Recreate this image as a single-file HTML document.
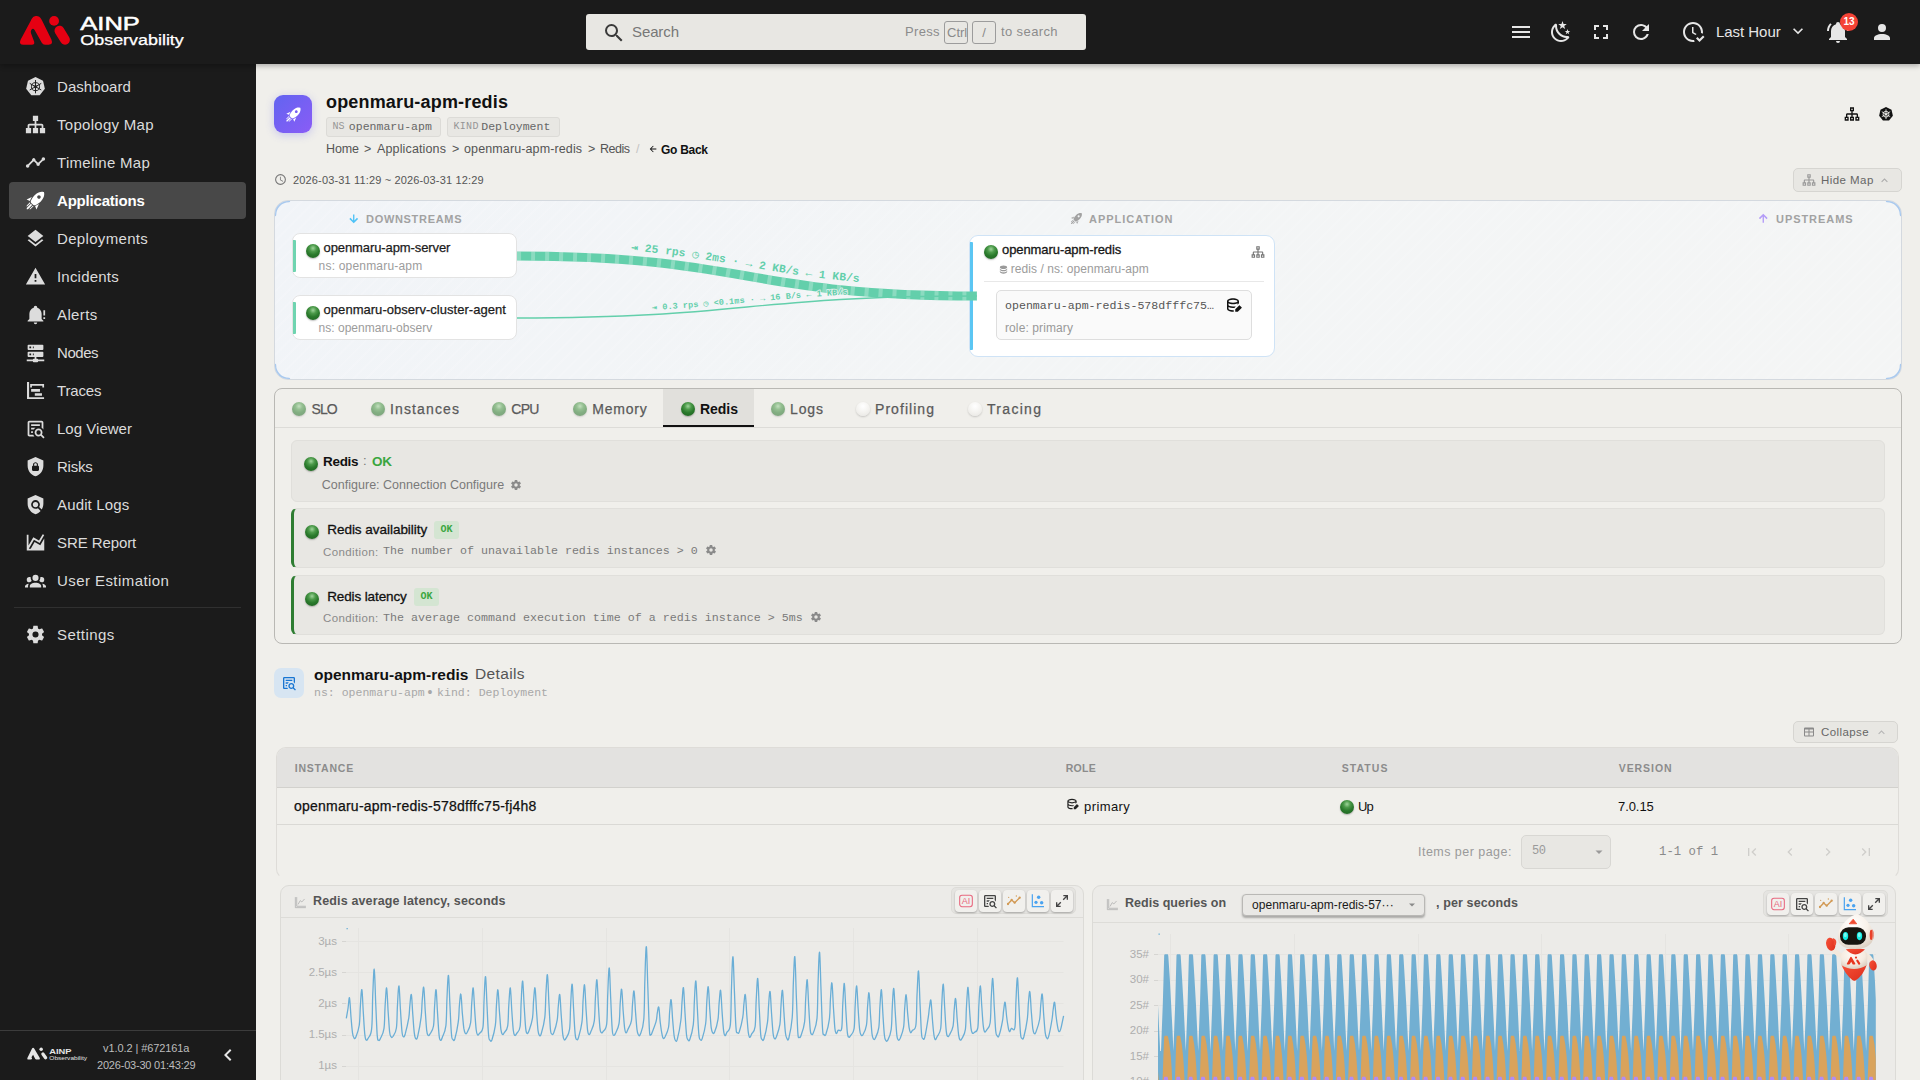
<!DOCTYPE html>
<html lang="en">
<head>
<meta charset="utf-8">
<title>openmaru-apm-redis - AINP Observability</title>
<style>
*{box-sizing:border-box;margin:0;padding:0}
html,body{width:1920px;height:1080px;overflow:hidden;background:#f0efeb;color:#1a1a1a;
  font-family:"Liberation Sans","Noto Sans CJK KR",sans-serif;font-size:13px}
.mono{font-family:"Liberation Mono","Noto Sans Mono CJK KR",monospace}
.abs{position:absolute}
.t{position:absolute;white-space:pre;line-height:1}
svg{display:block;overflow:visible}

/* ---------- top bar ---------- */
#topbar{position:absolute;left:0;top:0;width:1920px;height:64px;background:#1b1b1b;z-index:20;
  box-shadow:0 2px 5px rgba(0,0,0,.28)}
#search{position:absolute;left:586px;top:14px;width:500px;height:36px;background:#e8e7e3;border-radius:3px}
.kbd{position:absolute;top:7px;height:23px;border:1px solid #9c9c9c;border-radius:3px;color:#8a8a8a;
  font-size:13px;line-height:21px;text-align:center}

/* ---------- sidebar ---------- */
#sidebar{position:absolute;left:0;top:64px;width:256px;height:1016px;background:#1b1b1b;z-index:10}
.nav{position:absolute;left:9px;width:237px;height:37px;border-radius:4px;color:#dcdcdc;font-size:15px}
.nav.on{background:#484848;color:#fff;font-weight:700}
.nav svg{position:absolute;left:16px;top:8px;width:21px;height:21px;fill:#dcdcdc}
.nav.on svg{fill:#fff}
.nav span{position:absolute;left:48px;top:0;line-height:37px;white-space:pre;letter-spacing:.35px}

/* ---------- main ---------- */
#main{position:absolute;left:256px;top:64px;width:1664px;height:1016px;background:#f0efeb;overflow:hidden}

/* ---------- header ---------- */
.badge{position:absolute;top:53px;height:20px;background:#e8e7e3;border:1px solid #dcdbd7;border-radius:3px}
.badge b{position:absolute;top:4px;font-size:10px;font-weight:400;color:#959595;line-height:1}
.badge i{position:absolute;top:3px;font-style:normal;font-size:11.5px;color:#666;line-height:1;white-space:pre}
.crumb{position:absolute;top:78px;font-size:12.5px;color:#555;line-height:15px;white-space:pre}
.btn{position:absolute;background:#e8e7e3;border:1px solid #d6d5d1;border-radius:5px;color:#666;font-size:11.5px}
.orb{position:absolute;width:14px;height:14px;border-radius:50%;
  background:radial-gradient(circle at 50% 30%,#9ed49a 0%,#4c9a4a 28%,#2a7a2c 55%,#1d5e20 100%);
  box-shadow:0 1px 1.5px rgba(0,0,0,.25)}
.orb.dim{opacity:.55}
.orb.off{background:radial-gradient(circle at 50% 30%,#fff 0%,#f4f3f0 50%,#e6e5e1 100%);box-shadow:0 1px 2px rgba(0,0,0,.18)}
/* ---------- map ---------- */
#map{position:absolute;left:18px;top:136px;width:1628px;height:180px;border:1px solid #d4d9df;border-radius:14px;
  background-image:repeating-linear-gradient(135deg,rgba(255,255,255,.12) 0 2px,rgba(255,255,255,0) 2px 9px),linear-gradient(120deg,#f1f4f8 0%,#f3f5f6 45%,#f4f5f5 100%);overflow:hidden}
.maplbl{position:absolute;top:12px;font-size:11px;font-weight:700;color:#a2a2a2;letter-spacing:.75px;line-height:12px;white-space:pre}
.node{position:absolute;left:17px;width:225px;height:45px;background:#fff;border:1px solid #e3e3e3;border-radius:8px}
.node:before{content:"";position:absolute;left:0;top:6px;width:3px;height:32px;background:#6fd4b0;border-radius:0 1px 1px 0}
.node .nm{position:absolute;left:32px;top:6px;font-size:13px;color:#1c1c1c;line-height:15px;white-space:pre;-webkit-text-stroke:.25px #1c1c1c}
.node .ns{position:absolute;left:27px;top:25px;font-size:12px;color:#9c9c9c;line-height:14px;white-space:pre;letter-spacing:.2px}

/* ---------- tabs panel ---------- */
#panel{position:absolute;left:18px;top:324px;width:1628px;height:256px;border:1px solid #b9b8b4;border-radius:8px;background:#f0efeb}
.tab{position:absolute;top:0;height:38px;font-size:14px;color:#5a5a5a;white-space:pre}
.tab .orb{top:13px}
.tab span{position:absolute;top:12px;line-height:17px;-webkit-text-stroke:.25px #5a5a5a}
.tab.on{background:#e1e0dc;border-bottom:2px solid #111;color:#111}
.tab.on span{font-weight:700;-webkit-text-stroke:0}
.scard{position:absolute;left:16px;width:1594px;background:#e8e7e3;border:1px solid #e0dfdb;border-radius:6px}
.scard.g{border-left:3px solid #2e7d32}
.scard .ttl{position:absolute;font-size:13.5px;color:#111;line-height:16px;white-space:pre;-webkit-text-stroke:.3px #111}
.chip{position:absolute;height:18px;width:25px;background:#d4e5d2;border-radius:3px;color:#3aa640;font-size:10px;font-weight:700;line-height:18px;text-align:center}
.cond{position:absolute;font-size:11.5px;color:#8a8a8a;line-height:14px;white-space:pre;letter-spacing:.35px}
.condm{position:absolute;font-size:11.65px;color:#7a7a7a;line-height:14px;white-space:pre}

/* ---------- details / table ---------- */
#tbl{position:absolute;left:20px;top:683px;width:1623px;height:132px;border:1px solid #dedcd8;border-bottom-color:transparent;border-radius:10px;overflow:hidden;background:#f0efeb}
#tbl .hd{position:absolute;left:0;top:0;width:100%;height:40px;background:#e3e2e0;border-bottom:1px solid #d2d1cd}
.th{position:absolute;top:14px;margin-left:.7px;font-size:10.5px;font-weight:700;color:#8c8c8c;letter-spacing:1.2px;line-height:12px;white-space:pre}
.td{position:absolute;top:50px;font-size:13px;color:#111;line-height:16px;white-space:pre}
/* ---------- chart cards ---------- */
.chart{position:absolute;top:821px;width:804px;height:260px;border:1px solid #dcdbd7;border-radius:9px;background:#ecebe8;overflow:hidden}
.chart .hdr{position:absolute;left:0;top:0;width:100%;border-bottom:1px solid #dddcd8}
.ctitle{position:absolute;font-size:12.5px;font-weight:700;color:#555;line-height:15px;white-space:pre;letter-spacing:.45px}
.tools{position:absolute;width:125px;height:27px;background:#e5e4e1;border:1px solid #dddcd8;border-radius:5px}
.tools div{position:absolute;top:2px;width:22px;height:22px;background:#f1f0ed;border-radius:4px;box-shadow:0 1px 2px rgba(0,0,0,.28)}
.tools svg{position:absolute;left:3px;top:3px;width:16px;height:16px}
.yl{position:absolute;font-size:11.5px;color:#aeaeae;line-height:14px;text-align:right;width:50px;white-space:pre}
</style>
</head>
<body>

<!-- ================= TOP BAR ================= -->
<div id="topbar">
  <!-- logo -->
  <svg class="abs" style="left:20px;top:16px" width="50" height="30" viewBox="0 0 50 30">
    <path fill="#e60012" d="M10.900,4.600 C12.600,0.600 14.400,-0.100 16.400,-0.100 C18.600,-0.100 20,0.800 21.800,4 L31.400,23.600 Q33.400,28.800 28.600,28.800 L25,28.800 Q22.900,28.800 21.800,26.800 L14.600,14 Q13,11.600 11.400,13.800 Q10.300,15.400 11,17.200 L14.100,25.600 Q15,28.800 11.800,28.800 L3.600,28.800 Q-1.600,28.800 0.600,23.800 Z"/>
    <circle fill="#e60012" cx="34.100" cy="4.900" r="4.900"/>
    <path fill="none" stroke="#e60012" stroke-width="9.800" stroke-linecap="round" d="M39.400,14.600 L45,23.800"/>
  </svg>
  <svg class="abs" style="left:78px;top:12px" width="112" height="40" viewBox="0 0 112 40">
    <text x="2.300" y="17.700" fill="#fff" stroke="#fff" stroke-width=".5" font-family="Liberation Sans, sans-serif" font-weight="400" font-size="18.700" textLength="59.500" lengthAdjust="spacingAndGlyphs">AINP</text>
    <text x="2.300" y="32.600" fill="#fff" stroke="#fff" stroke-width=".25" font-family="Liberation Sans, sans-serif" font-weight="400" font-size="13.800" textLength="103.500" lengthAdjust="spacingAndGlyphs">Observability</text>
  </svg>
  <!-- search -->
  <div id="search">
    <svg class="abs" style="left:16px;top:7px" width="24" height="24" viewBox="0 0 24 24"><path fill="#3a3a3a" d="M9.5,3A6.5,6.5 0 0,1 16,9.5C16,11.11 15.41,12.59 14.44,13.73L14.71,14H15.5L20.5,19L19,20.5L14,15.5V14.71L13.73,14.44C12.59,15.41 11.11,16 9.5,16A6.5,6.5 0 0,1 3,9.5A6.5,6.5 0 0,1 9.5,3M9.5,5C7,5 5,7 5,9.5C5,12 7,14 9.5,14C12,14 14,12 14,9.5C14,7 12,5 9.5,5Z"/></svg>
    <span class="t" style="left:46px;top:10px;font-size:15px;color:#777;letter-spacing:-0.11px">Search</span>
    <span class="t" style="left:319px;top:11px;font-size:13px;color:#8c8c8c;letter-spacing:0.34px">Press</span>
    <span class="kbd" style="left:358px;width:24px;overflow:hidden;text-align:left;padding-left:2px">Ctrl</span>
    <span class="kbd" style="left:386px;width:24px">/</span>
    <span class="t" style="left:415px;top:11px;font-size:13px;color:#8c8c8c;letter-spacing:0.39px">to search</span>
  </div>
  <!-- right icons -->
  <svg class="abs" style="left:1509px;top:20px" width="24" height="24" viewBox="0 0 24 24"><path fill="#e6e6e6" d="M3,6H21V8H3V6M3,11H21V13H3V11M3,16H21V18H3V16Z"/></svg>
  <svg class="abs" style="left:1549px;top:20px" width="24" height="24" viewBox="0 0 24 24"><path fill="#e6e6e6" d="M17.75,4.09L15.22,6.03L16.13,9.09L13.5,7.28L10.87,9.09L11.78,6.03L9.25,4.09L12.44,4L13.5,1L14.56,4L17.75,4.09M21.25,11L19.61,12.25L20.2,14.23L18.5,13.06L16.8,14.23L17.39,12.25L15.75,11L17.81,10.95L18.5,9L19.19,10.95L21.25,11M18.97,15.95C19.8,15.87 20.69,17.05 20.16,17.8C19.84,18.25 19.5,18.67 19.08,19.07C15.17,23 8.84,23 4.94,19.07C1.03,15.17 1.03,8.83 4.94,4.93C5.34,4.53 5.76,4.17 6.21,3.85C6.96,3.32 8.14,4.21 8.06,5.04C7.79,7.9 8.75,10.87 10.95,13.06C13.14,15.26 16.1,16.22 18.97,15.95M17.33,17.97C14.5,17.81 11.7,16.64 9.53,14.5C7.36,12.31 6.2,9.5 6.04,6.68C3.23,9.82 3.34,14.64 6.35,17.66C9.37,20.67 14.19,20.78 17.33,17.97Z"/></svg>
  <svg class="abs" style="left:1589px;top:20px" width="24" height="24" viewBox="0 0 24 24"><path fill="#e6e6e6" d="M5,5H10V7H7V10H5V5M14,5H19V10H17V7H14V5M17,14H19V19H14V17H17V14M10,17V19H5V14H7V17H10Z"/></svg>
  <svg class="abs" style="left:1629px;top:20px" width="24" height="24" viewBox="0 0 24 24"><path fill="#e6e6e6" d="M17.65,6.35C16.2,4.9 14.21,4 12,4A8,8 0 0,0 4,12A8,8 0 0,0 12,20C15.73,20 18.84,17.45 19.73,14H17.65C16.83,16.33 14.61,18 12,18A6,6 0 0,1 6,12A6,6 0 0,1 12,6C13.66,6 15.14,6.69 16.22,7.78L13,11H20V4L17.65,6.35Z"/></svg>
  <svg class="abs" style="left:1681px;top:20px" width="24" height="24" viewBox="0 0 24 24"><path fill="#e6e6e6" d="M23.5,17L18.5,22L15,18.5L16.5,17L18.5,19L22,15.5L23.5,17M13.1,19.9C12.7,20 12.4,20 12,20C7.6,20 4,16.4 4,12C4,7.6 7.6,4 12,4C16.4,4 20,7.6 20,12C20,12.4 20,12.7 19.9,13.1C20.6,13.2 21.2,13.4 21.8,13.7C21.9,13.1 22,12.6 22,12C22,6.5 17.5,2 12,2C6.5,2 2,6.5 2,12C2,17.5 6.5,22 12,22C12.6,22 13.2,21.9 13.7,21.8C13.4,21.3 13.2,20.6 13.1,19.9M15.6,14.1L12.5,12.3V7H11V13L14.5,15.1C14.8,14.7 15.2,14.4 15.6,14.1Z"/></svg>
  <span class="t" style="left:1716px;top:24px;font-size:15px;color:#e6e6e6;letter-spacing:-0.04px">Last Hour</span>
  <svg class="abs" style="left:1788px;top:21px" width="20" height="20" viewBox="0 0 24 24"><path fill="#e6e6e6" d="M7.41,8.58L12,13.17L16.59,8.58L18,10L12,16L6,10L7.41,8.58Z"/></svg>
  <svg class="abs" style="left:1826px;top:20px" width="24" height="24" viewBox="0 0 24 24"><path fill="#e6e6e6" d="M21,19V20H3V19L5,17V11C5,7.9 7.03,5.17 10,4.29C10,4.19 10,4.1 10,4A2,2 0 0,1 12,2A2,2 0 0,1 14,4C14,4.1 14,4.19 14,4.29C16.97,5.17 19,7.9 19,11V17L21,19M14,21A2,2 0 0,1 12,23A2,2 0 0,1 10,21M19.75,3.19L18.33,4.61C20.04,6.3 21,8.6 21,11H23C23,8.07 21.84,5.25 19.75,3.19M1,11H3C3,8.6 3.96,6.3 5.67,4.61L4.25,3.19C2.16,5.25 1,8.07 1,11Z"/></svg>
  <div class="abs" style="left:1840px;top:13px;width:18px;height:18px;border-radius:9px;background:#f44336;color:#fff;font-size:10px;font-weight:700;line-height:18px;text-align:center">13</div>
  <svg class="abs" style="left:1870px;top:20px" width="24" height="24" viewBox="0 0 24 24"><path fill="#e6e6e6" d="M12,4A4,4 0 0,1 16,8A4,4 0 0,1 12,12A4,4 0 0,1 8,8A4,4 0 0,1 12,4M12,14C16.42,14 20,15.79 20,18V20H4V18C4,15.79 7.58,14 12,14Z"/></svg>
</div>

<!-- ================= SIDEBAR ================= -->
<div id="sidebar">
  <div class="nav" style="top:4px"><svg viewBox="0 0 24 24"><path d="M12 1.2 L20.6 5.3 L22.7 14.6 L16.8 22 L7.2 22 L1.3 14.6 L3.4 5.3 Z"/><g fill="none" stroke="#1b1b1b" stroke-width="1.1"><circle cx="12" cy="12.2" r="4.6"/><circle cx="12" cy="12.2" r="1.4"/><path d="M12 4.6V19.8M5.4 8.4L18.6 16M18.6 8.4L5.4 16"/></g></svg><span style="letter-spacing:0.06px">Dashboard</span></div>
  <div class="nav" style="top:42px"><svg viewBox="0 0 24 24"><path d="M9,2V8H11V11H5C3.89,11 3,11.89 3,13V16H1V22H7V16H5V13H11V16H9V22H15V16H13V13H19V16H17V22H23V16H21V13C21,11.89 20.11,11 19,11H13V8H15V2H9Z"/></svg><span style="letter-spacing:0.29px">Topology Map</span></div>
  <div class="nav" style="top:80px"><svg viewBox="0 0 24 24"><path d="M3,14L3.5,14.07L8.07,9.5C7.89,8.85 8.06,8.11 8.59,7.59C9.37,6.8 10.63,6.8 11.41,7.59C11.94,8.11 12.11,8.85 11.93,9.5L14.5,12.07L15,12C15.18,12 15.35,12 15.5,12.07L19.07,8.5C19,8.35 19,8.18 19,8A2,2 0 0,1 21,6A2,2 0 0,1 23,8A2,2 0 0,1 21,10C20.82,10 20.65,10 20.5,9.93L16.93,13.5C17,13.65 17,13.82 17,14A2,2 0 0,1 15,16A2,2 0 0,1 13,14L13.07,13.5L10.5,10.93C10.18,11 9.82,11 9.5,10.93L4.93,15.5L5,16A2,2 0 0,1 3,18A2,2 0 0,1 1,16A2,2 0 0,1 3,14Z"/></svg><span style="letter-spacing:0.30px">Timeline Map</span></div>
  <div class="nav on" style="top:118px"><svg viewBox="0 0 24 24"><path d="M13.13 22.19L11.5 18.36C13.07 17.78 14.54 17 15.9 16.09L13.13 22.19M5.64 12.5L1.81 10.87L7.91 8.1C7 9.46 6.22 10.93 5.64 12.5M21.61 2.39C21.61 2.39 16.66 .269 11 5.93C8.81 8.12 7.5 10.53 6.65 12.64C6.37 13.39 6.56 14.21 7.11 14.77L9.24 16.89C9.79 17.45 10.61 17.63 11.36 17.35C13.5 16.53 15.88 15.19 18.07 13C23.73 7.34 21.61 2.39 21.61 2.39M14.54 9.46C13.76 8.68 13.76 7.41 14.54 6.63S16.59 5.85 17.37 6.63C18.14 7.41 18.15 8.68 17.37 9.46C16.59 10.24 15.32 10.24 14.54 9.46M8.88 16.53L7.47 15.12L8.88 16.53M6.24 22L9.88 18.36C9.54 18.27 9.21 18.12 8.91 17.91L4.83 22H6.24M2 22H3.41L8.18 17.24L6.76 15.83L2 20.59V22M2 19.17L6.09 15.09C5.88 14.79 5.73 14.47 5.64 14.12L2 17.76V19.17Z"/></svg><span style="letter-spacing:-0.20px">Applications</span></div>
  <div class="nav" style="top:156px"><svg viewBox="0 0 24 24"><path d="M12,16L19.36,10.27L21,9L12,2L3,9L4.63,10.27M12,18.54L4.62,12.81L3,14.07L12,21.07L21,14.07L19.37,12.8L12,18.54Z"/></svg><span style="letter-spacing:0.33px">Deployments</span></div>
  <div class="nav" style="top:194px"><svg viewBox="0 0 24 24"><path d="M13 14H11V9H13M13 18H11V16H13M1 21H23L12 2L1 21Z"/></svg><span style="letter-spacing:0.20px">Incidents</span></div>
  <div class="nav" style="top:232px"><svg viewBox="0 0 24 24"><path d="M23,7V13H21V7M21,15H23V17H21M12,2A2,2 0 0,0 10,4A2,2 0 0,0 10,4.29C7.12,5.14 5,7.82 5,11V17L3,19V20H21V19L19,17V11C19,7.82 16.88,5.14 14,4.29A2,2 0 0,0 14,4A2,2 0 0,0 12,2M10,21A2,2 0 0,0 12,23A2,2 0 0,0 14,21H10Z"/></svg><span style="letter-spacing:0.39px">Alerts</span></div>
  <div class="nav" style="top:270px"><svg viewBox="0 0 24 24"><path d="M13,19H14A1,1 0 0,1 15,20H22V22H15A1,1 0 0,1 14,23H10A1,1 0 0,1 9,22H2V20H9A1,1 0 0,1 10,19H11V17H4A1,1 0 0,1 3,16V12A1,1 0 0,1 4,11H20A1,1 0 0,1 21,12V16A1,1 0 0,1 20,17H13V19M4,3H20A1,1 0 0,1 21,4V8A1,1 0 0,1 20,9H4A1,1 0 0,1 3,8V4A1,1 0 0,1 4,3M9,7H10V5H9V7M9,15H10V13H9V15M5,5V7H7V5H5M5,13V15H7V13H5Z"/></svg><span style="letter-spacing:-0.44px">Nodes</span></div>
  <div class="nav" style="top:308px"><svg viewBox="0 0 24 24"><path d="M2.300 2.300H4.700V19.700H21.800V21.700H2.300Z M5.900 4.600H21.800V8.700H19.800V6.700H7.900V8.700H5.900Z M7 10.300H17.100V13.300H7Z M11.200 15H19.400V18H11.200Z"/></svg><span style="letter-spacing:-0.18px">Traces</span></div>
  <div class="nav" style="top:346px"><svg viewBox="0 0 24 24"><path d="M15.5,12C18,12 20,14 20,16.5C20,17.38 19.75,18.21 19.31,18.9L22.39,22L21,23.39L17.88,20.32C17.19,20.75 16.37,21 15.5,21C13,21 11,19 11,16.5C11,14 13,12 15.5,12M15.5,14A2.5,2.5 0 0,0 13,16.5A2.5,2.5 0 0,0 15.5,19A2.5,2.5 0 0,0 18,16.5A2.5,2.5 0 0,0 15.5,14M5,3H19C20.11,3 21,3.89 21,5V13.03C20.5,12.23 19.81,11.54 19,11V5H5V19H9.5C9.81,19.75 10.26,20.42 10.81,21H5C3.89,21 3,20.11 3,19V5C3,3.89 3.89,3 5,3M7,7H17V9H7V7M7,11H12.03C11.23,11.5 10.54,12.19 10,13H7V11M7,15H9.17C9.06,15.5 9,16 9,16.5V17H7V15Z"/></svg><span style="letter-spacing:0.02px">Log Viewer</span></div>
  <div class="nav" style="top:384px"><svg viewBox="0 0 24 24"><path d="M12,1L3,5V11C3,16.55 6.84,21.74 12,23C17.16,21.74 21,16.55 21,11V5L12,1M12,7C13.4,7 14.8,8.1 14.8,9.5V11C15.4,11 16,11.6 16,12.3V15.8C16,16.4 15.4,17 14.7,17H9.2C8.6,17 8,16.4 8,15.7V12.2C8,11.6 8.6,11 9.2,11V9.5C9.2,8.1 10.6,7 12,7M12,8.2C11.2,8.2 10.5,8.7 10.5,9.5V11H13.5V9.5C13.5,8.7 12.8,8.2 12,8.2Z"/></svg><span style="letter-spacing:-0.22px">Risks</span></div>
  <div class="nav" style="top:422px"><svg viewBox="0 0 24 24"><path d="M21 5l-9-4-9 4v6c0 5.55 3.84 10.74 9 12 2.3-.56 4.33-1.9 5.88-3.71l-3.12-3.12c-1.94 1.29-4.58 1.07-6.29-.64-1.95-1.95-1.95-5.12 0-7.07 1.95-1.95 5.12-1.95 7.07 0 1.71 1.71 1.92 4.35.64 6.29l2.9 2.9C20.29 15.69 21 13.38 21 11V5z"/><circle cx="12" cy="12" r="3"/></svg><span style="letter-spacing:0.15px">Audit Logs</span></div>
  <div class="nav" style="top:460px"><svg viewBox="0 0 24 24"><path d="M17.45,15.18L22,7.31V19L22,21H2V3H4V15.54L9.5,6L16,9.78L20.24,2.45L21.97,3.45L16.74,12.5L10.23,8.75L4.31,19H6.57L10.96,11.44L17.45,15.18Z"/></svg><span style="letter-spacing:-0.09px">SRE Report</span></div>
  <div class="nav" style="top:498px"><svg viewBox="0 0 24 24"><path d="M12,5.5A3.5,3.5 0 0,1 15.5,9A3.5,3.5 0 0,1 12,12.5A3.5,3.5 0 0,1 8.5,9A3.5,3.5 0 0,1 12,5.5M5,8C5.56,8 6.08,8.15 6.53,8.42C6.38,9.85 6.8,11.27 7.66,12.38C7.16,13.34 6.16,14 5,14A3,3 0 0,1 2,11A3,3 0 0,1 5,8M19,8A3,3 0 0,1 22,11A3,3 0 0,1 19,14C17.84,14 16.84,13.34 16.34,12.38C17.2,11.27 17.62,9.85 17.47,8.42C17.92,8.15 18.44,8 19,8M5.5,18.25C5.5,16.18 8.41,14.5 12,14.5C15.59,14.5 18.5,16.18 18.5,18.25V20H5.5V18.25M0,20V18.5C0,17.11 1.89,15.94 4.45,15.6C3.86,16.28 3.5,17.22 3.5,18.25V20H0M24,20H20.5V18.25C20.5,17.22 20.14,16.28 19.55,15.6C22.11,15.94 24,17.11 24,18.5V20Z"/></svg><span style="letter-spacing:0.43px">User Estimation</span></div>
  <div class="nav" style="top:552px"><svg viewBox="0 0 24 24"><path d="M12,15.5A3.5,3.5 0 0,1 8.5,12A3.5,3.5 0 0,1 12,8.5A3.5,3.5 0 0,1 15.5,12A3.5,3.5 0 0,1 12,15.5M19.43,12.97C19.47,12.65 19.5,12.33 19.5,12C19.5,11.67 19.47,11.34 19.43,11L21.54,9.37C21.73,9.22 21.78,8.95 21.66,8.73L19.66,5.27C19.54,5.05 19.27,4.96 19.05,5.05L16.56,6.05C16.04,5.66 15.5,5.32 14.87,5.07L14.5,2.42C14.46,2.18 14.25,2 14,2H10C9.75,2 9.54,2.18 9.5,2.42L9.13,5.07C8.5,5.32 7.96,5.66 7.44,6.05L4.95,5.05C4.73,4.96 4.46,5.05 4.34,5.27L2.34,8.73C2.21,8.95 2.27,9.22 2.46,9.37L4.57,11C4.53,11.34 4.5,11.67 4.5,12C4.5,12.33 4.53,12.65 4.57,12.97L2.46,14.63C2.27,14.78 2.21,15.05 2.34,15.27L4.34,18.73C4.46,18.95 4.73,19.03 4.95,18.95L7.44,17.94C7.96,18.34 8.5,18.68 9.13,18.93L9.5,21.58C9.54,21.82 9.75,22 10,22H14C14.25,22 14.46,21.82 14.5,21.58L14.87,18.93C15.5,18.67 16.04,18.34 16.56,17.94L19.05,18.95C19.27,19.03 19.54,18.95 19.66,18.73L21.66,15.27C21.78,15.05 21.73,14.78 21.54,14.63L19.43,12.97Z"/></svg><span style="letter-spacing:0.43px">Settings</span></div>
  <div class="abs" style="left:14px;top:543px;width:227px;height:1px;background:#303030"></div>
  <!-- footer -->
  <div class="abs" style="left:0;top:966px;width:256px;height:1px;background:#3c3c3c"></div>
  <svg class="abs" style="left:27px;top:983px" width="64" height="17.500" viewBox="0 0 66 18">
    <g fill="#e6e6e6"><path d="M5.2 1.4 Q6.3 0.2 7.4 1.4 L13.2 11.2 Q13.8 12.8 12.2 12.8 L9.6 12.8 Q8.8 12.8 8.4 12 L6.3 8 L4.6 10.6 L5.2 11.6 Q5.4 12.8 4.2 12.8 L1.2 12.8 Q-0.2 12.8 0.4 11.2 Z"/><circle cx="14.6" cy="2.4" r="1.8"/><path d="M16.4 7.2 L19.2 11" stroke="#e6e6e6" stroke-width="3.4" stroke-linecap="round"/></g>
    <text x="23" y="7.4" fill="#e6e6e6" font-family="Liberation Sans, sans-serif" font-weight="700" font-size="7.6" textLength="23" lengthAdjust="spacingAndGlyphs">AINP</text>
    <text x="23" y="13.6" fill="#e6e6e6" font-family="Liberation Sans, sans-serif" font-size="6.4" textLength="39" lengthAdjust="spacingAndGlyphs">Observability</text>
  </svg>
  <span class="t" style="left:103px;top:979px;font-size:11px;color:#bdbdbd;letter-spacing:-0.09px">v1.0.2 | #672161a</span>
  <span class="t" style="left:97px;top:996px;font-size:11px;color:#bdbdbd;letter-spacing:-0.20px">2026-03-30 01:43:29</span>
  <svg class="abs" style="left:216px;top:979px" width="24" height="24" viewBox="0 0 24 24"><path fill="#e6e6e6" d="M15.41,16.58L10.83,12L15.41,7.41L14,6L8,12L14,18L15.41,16.58Z"/></svg>
</div>

<!-- ================= MAIN ================= -->
<div id="main">
  <!-- header -->
  <div class="abs" style="left:18px;top:31px;width:38px;height:38px;border-radius:9px;background:linear-gradient(135deg,#6264f0 0%,#8a5cf6 100%);box-shadow:0 2px 9px rgba(99,102,241,.3)">
    <svg class="abs" style="left:10.500px;top:10.500px" width="17" height="17" viewBox="0 0 24 24"><path fill="#fff" d="M13.13 22.19L11.5 18.36C13.07 17.78 14.54 17 15.9 16.09L13.13 22.19M5.64 12.5L1.81 10.87L7.91 8.1C7 9.46 6.22 10.93 5.64 12.5M21.61 2.39C21.61 2.39 16.66 .269 11 5.93C8.81 8.12 7.5 10.53 6.65 12.64C6.37 13.39 6.56 14.21 7.11 14.77L9.24 16.89C9.79 17.45 10.61 17.63 11.36 17.35C13.5 16.53 15.88 15.19 18.07 13C23.73 7.34 21.61 2.39 21.61 2.39M14.54 9.46C13.76 8.68 13.76 7.41 14.54 6.63S16.59 5.85 17.37 6.63C18.14 7.41 18.15 8.68 17.37 9.46C16.59 10.24 15.32 10.24 14.54 9.46M6.24 22L9.88 18.36C9.54 18.27 9.21 18.12 8.91 17.91L4.83 22H6.24M2 22H3.41L8.18 17.24L6.76 15.83L2 20.59V22M2 19.17L6.09 15.09C5.88 14.79 5.73 14.47 5.64 14.12L2 17.76V19.17Z"/></svg>
  </div>
  <span class="t" style="left:70px;top:28px;font-size:18px;font-weight:700;color:#111;line-height:21px;letter-spacing:0.17px">openmaru-apm-redis</span>
  <div class="badge" style="left:70px;width:115px"><b class="mono" style="left:5.500px">NS</b><i class="mono" style="left:23px;letter-spacing:0.02px;transform:translate(-1.2px,0.0px)">openmaru-apm</i></div>
  <div class="badge" style="left:191px;width:113px"><b class="mono" style="left:5.500px;letter-spacing:.3px">KIND</b><i class="mono" style="left:35px;letter-spacing:-0.00px;transform:translate(-1.7px,0.0px)">Deployment</i></div>
  <span class="crumb" style="left:70px;letter-spacing:-0.11px">Home</span><span class="crumb" style="left:108px">&gt;</span>
  <span class="crumb" style="left:121px;letter-spacing:0.14px">Applications</span><span class="crumb" style="left:196px">&gt;</span>
  <span class="crumb" style="left:208px;letter-spacing:0.12px">openmaru-apm-redis</span><span class="crumb" style="left:332px">&gt;</span>
  <span class="crumb" style="left:344px;letter-spacing:-0.49px">Redis</span><span class="crumb" style="left:380px;color:#c4c4c4">/</span>
  <svg class="abs" style="left:392px;top:80px" width="10" height="10" viewBox="0 0 24 24"><path fill="#111" d="M20,11V13H8L13.5,18.500L12.08,19.92L4.16,12L12.08,4.08L13.5,5.5L8,11H20Z"/></svg>
  <span class="crumb" style="left:405px;color:#111;font-weight:700;font-size:12px;letter-spacing:-0.28px;transform:translate(0.0px,1.0px)">Go Back</span>
  <!-- header right icons -->
  <svg class="abs" style="left:1588px;top:42px" width="16" height="16" viewBox="0 0 24 24"><path fill="#111" d="M9,2V8H11V11H5C3.89,11 3,11.89 3,13V16H1V22H7V16H5V13H11V16H9V22H15V16H13V13H19V16H17V22H23V16H21V13C21,11.89 20.11,11 19,11H13V8H15V2H9M11,4H13V6H11V4M3,18H5V20H3V18M11,18H13V20H11V18M19,18H21V20H19V18Z"/></svg>
  <svg class="abs" style="left:1622px;top:42px" width="16" height="16" viewBox="0 0 24 24"><path fill="#111" d="M12 1.6 L20.3 5.6 L22.3 14.5 L16.6 21.7 L7.4 21.7 L1.7 14.5 L3.7 5.6 Z"/><g fill="none" stroke="#f0efeb" stroke-width="1.3"><circle cx="12" cy="12.3" r="4.4"/><path d="M12 5V19.6M5.7 8.6L18.3 16M18.3 8.6L5.7 16"/></g><circle cx="12" cy="12.3" r="1.5" fill="#f0efeb"/></svg>
  <!-- time range -->
  <svg class="abs" style="left:18px;top:109px" width="13" height="13" viewBox="0 0 24 24"><path fill="#777" d="M12,20A8,8 0 0,0 20,12A8,8 0 0,0 12,4A8,8 0 0,0 4,12A8,8 0 0,0 12,20M12,2A10,10 0 0,1 22,12A10,10 0 0,1 12,22C6.47,22 2,17.5 2,12A10,10 0 0,1 12,2M12.500,7V12.25L17,14.92L16.25,16.15L11,13V7H12.500Z"/></svg>
  <span class="t" style="left:37px;top:110px;font-size:11px;color:#555;line-height:13px;letter-spacing:0.15px">2026-03-31 11:29 ~ 2026-03-31 12:29</span>
  <div class="btn" style="left:1537px;top:104px;width:109px;height:24px">
    <svg class="abs" style="left:8px;top:4px" width="14" height="14" viewBox="0 0 24 24"><path fill="#9a9a9a" d="M9,2V8H11V11H5C3.89,11 3,11.89 3,13V16H1V22H7V16H5V13H11V16H9V22H15V16H13V13H19V16H17V22H23V16H21V13C21,11.89 20.11,11 19,11H13V8H15V2H9M11,4H13V6H11V4M3,18H5V20H3V18M11,18H13V20H11V18M19,18H21V20H19V18Z"/></svg>
    <span class="t" style="left:27px;top:5px;line-height:13px;letter-spacing:0.44px">Hide Map</span>
    <svg class="abs" style="left:84px;top:5px" width="13" height="13" viewBox="0 0 24 24"><path fill="#aaa" d="M7.41,15.41L12,10.83L16.59,15.41L18,14L12,8L6,14L7.410,15.41Z"/></svg>
  </div>

  <!-- ============ dependency map ============ -->
  <div id="map">
    <svg class="abs" style="left:-1px;top:-1px" width="1628" height="180" viewBox="0 0 1628 180">
      <!-- corner accents -->
      <g fill="none" stroke="#a9c9ee" stroke-width="2.4" stroke-linecap="round">
        <path d="M1,15 A14 14 0 0 1 15 1"/><path d="M1613,1 A14 14 0 0 1 1627 15"/>
        <path d="M1,165 A14 14 0 0 0 15 179"/><path d="M1613,179 A14 14 0 0 0 1627 165"/>
      </g>
    </svg>
    <svg class="abs" style="left:73px;top:12px" width="11" height="11" viewBox="0 0 24 24"><path fill="#4fc3f7" d="M11,3V16.200L5.400,10.600L3,13L12.500,22.500L22,13L19.600,10.600L14,16.200V3Z"/></svg>
    <span class="maplbl" style="left:91px;letter-spacing:0.69px">DOWNSTREAMS</span>
    <svg class="abs" style="left:795px;top:11px" width="13" height="13" viewBox="0 0 24 24"><path fill="#a2a2a2" d="M13.13 22.19L11.5 18.36C13.07 17.78 14.54 17 15.9 16.09L13.13 22.19M5.64 12.5L1.81 10.87L7.91 8.1C7 9.46 6.22 10.93 5.64 12.5M21.61 2.39C21.61 2.39 16.66 .269 11 5.93C8.81 8.12 7.5 10.53 6.65 12.64C6.37 13.39 6.56 14.21 7.11 14.77L9.24 16.89C9.79 17.45 10.61 17.63 11.36 17.35C13.5 16.53 15.88 15.19 18.07 13C23.73 7.34 21.61 2.39 21.61 2.39M14.54 9.46C13.76 8.68 13.76 7.41 14.54 6.63S16.59 5.85 17.37 6.63C18.14 7.41 18.15 8.68 17.37 9.46C16.59 10.24 15.32 10.24 14.54 9.46M6.24 22L9.88 18.36C9.54 18.27 9.21 18.12 8.91 17.91L4.83 22H6.24M2 22H3.41L8.18 17.24L6.76 15.83L2 20.59V22M2 19.17L6.09 15.09C5.88 14.79 5.73 14.47 5.64 14.12L2 17.76V19.17Z"/></svg>
    <span class="maplbl" style="left:814px;letter-spacing:0.97px">APPLICATION</span>
    <svg class="abs" style="left:1483px;top:12px" width="11" height="11" viewBox="0 0 24 24"><path fill="#b49cf8" d="M13,21V7.800L18.600,13.400L21,11L11.500,1.500L2,11L4.400,13.400L10,7.800V21Z"/></svg>
    <span class="maplbl" style="left:1501px;letter-spacing:0.94px">UPSTREAMS</span>

    <div class="node" style="top:32px"><div class="orb" style="left:13px;top:10px"></div><span class="nm" style="letter-spacing:-0.10px;transform:translate(-1.4px,0.0px)">openmaru-apm-server</span><span class="ns" style="letter-spacing:0.19px;transform:translate(-1.4px,0.0px)">ns: openmaru-apm</span></div>
    <div class="node" style="top:94px"><div class="orb" style="left:13px;top:10px"></div><span class="nm" style="letter-spacing:0.03px;transform:translate(-1.4px,0.0px)">openmaru-observ-cluster-agent</span><span class="ns" style="letter-spacing:0.01px;transform:translate(-1.4px,0.0px)">ns: openmaru-observ</span></div>

    <!-- application card -->
    <div class="abs" style="left:694px;top:34px;width:306px;height:122px;background:#fff;border:1px solid #cfe3f6;border-radius:9px">
      <div class="abs" style="left:0;top:6px;width:3px;height:108px;background:#5bc6f3;border-radius:0 1px 1px 0"></div>
      <div class="orb" style="left:14px;top:9px"></div>
      <span class="t" style="left:32px;top:6px;font-size:13px;color:#161616;line-height:16px;-webkit-text-stroke:.3px #161616;letter-spacing:-0.08px">openmaru-apm-redis</span>
      <svg class="abs" style="left:281px;top:9px" width="14" height="14" viewBox="0 0 24 24"><path fill="#777" d="M9,2V8H11V11H5C3.89,11 3,11.89 3,13V16H1V22H7V16H5V13H11V16H9V22H15V16H13V13H19V16H17V22H23V16H21V13C21,11.89 20.11,11 19,11H13V8H15V2H9M11,4H13V6H11V4M3,18H5V20H3V18M11,18H13V20H11V18M19,18H21V20H19V18Z"/></svg>
      <svg class="abs" style="left:28px;top:28px" width="11" height="11" viewBox="0 0 24 24"><path fill="#9a9a9a" d="M12,3C7.580,3 4,4.790 4,7C4,9.210 7.580,11 12,11C16.420,11 20,9.210 20,7C20,4.790 16.420,3 12,3M4,9V12C4,14.210 7.580,16 12,16C16.420,16 20,14.210 20,12V9C20,11.210 16.420,13 12,13C7.580,13 4,11.210 4,9M4,14V17C4,19.210 7.580,21 12,21C16.420,21 20,19.210 20,17V14C20,16.210 16.420,18 12,18C7.580,18 4,16.210 4,14Z"/></svg>
      <span class="t" style="left:42px;top:26px;font-size:12px;color:#9c9c9c;line-height:14px;letter-spacing:0.05px;transform:translate(-1.2px,0.0px)">redis / ns: openmaru-apm</span>
      <div class="abs" style="left:14px;top:45px;width:280px;height:1px;background:#e8e8e8"></div>
      <div class="abs" style="left:26px;top:54px;width:256px;height:50px;background:#fafafa;border:1px solid #dedede;border-radius:5px">
        <span class="t mono" style="left:8px;top:8px;font-size:11.600px;color:#555;line-height:14px;letter-spacing:0.01px">openmaru-apm-redis-578dfffc75…</span>
        <svg class="abs" style="left:227px;top:5px" width="18" height="18" viewBox="0 0 24 24"><path fill="#111" d="M12,3C7.580,3 4,4.790 4,7V17C4,19.210 7.590,21 12,21C12.340,21 12.680,20.990 13.010,20.970L13,19C12.670,19.020 12.340,19 12,19C8.130,19 6,17.500 6,17V14.770C7.610,15.550 9.720,16 12,16C12.650,16 13.270,15.960 13.880,15.890L15.760,14H12C8.130,14 6,12.500 6,12V9.640C7.470,10.470 9.610,11 12,11C14.390,11 16.530,10.470 18,9.640V11.750L20,9.750V7C20,4.790 16.420,3 12,3M12,5C15.870,5 18,6.500 18,7C18,7.500 15.870,9 12,9C8.130,9 6,7.500 6,7C6,6.500 8.130,5 12,5M20.130,12.500L15,17.630V21H18.370L23.500,15.870C23.700,15.670 23.700,15.330 23.500,15.130L20.870,12.500C20.670,12.300 20.330,12.300 20.130,12.500Z"/></svg>
        <span class="t" style="left:8px;top:30px;font-size:12px;color:#999;line-height:14px;letter-spacing:0.10px">role: primary</span>
      </div>
    </div>
    <svg class="abs" style="left:0;top:0" width="1626" height="178" viewBox="0 0 1626 178">
      <!-- links -->
      <path id="lk1" d="M242,55 C472,55 472,95 702,95" fill="none" stroke="#63cfab" stroke-width="9"/>
      <path d="M242,55 C472,55 472,95 702,95" fill="none" stroke="#fff" stroke-opacity=".26" stroke-width="9" stroke-dasharray="4 10"/>
      <path id="lk2" d="M242,117 C472,117 472,95 702,95" fill="none" stroke="#63cfab" stroke-width="1.4"/>
      <path id="lb1" d="M242,45.500 C472,45.500 472,85.500 702,85.500" fill="none"/>
      <path id="lb2" d="M242,112.500 C472,112.500 472,90.500 702,90.500" fill="none"/>
      <text font-family="Liberation Mono, DejaVu Sans Mono, monospace" font-size="11.300" font-weight="700" fill="#63cfab" stroke="#f3f5f7" stroke-width="2.400" stroke-opacity=".8" stroke-linejoin="round" paint-order="stroke"><textPath href="#lb1" startOffset="114" xml:space="preserve">⇥ 25 rps ◷ 2ms · → 2 KB/s ← 1 KB/s</textPath></text>
      <text font-family="Liberation Mono, DejaVu Sans Mono, monospace" font-size="8.600" font-weight="700" fill="#63cfab" stroke="#f3f5f7" stroke-width="2" stroke-opacity=".8" stroke-linejoin="round" paint-order="stroke"><textPath href="#lb2" startOffset="135" xml:space="preserve">⇥ 0.3 rps ◷ &lt;0.1ms · → 16 B/s ← 1 KB/s</textPath></text>
    </svg>
  </div>
  <!-- ============ tabs panel ============ -->
  <div id="panel">
    <div class="abs" style="left:0;top:38px;width:1626px;height:1px;background:#dddcd8"></div>
    <div class="tab" style="left:7px;width:100px"><div class="orb dim" style="left:10.0px"></div><span style="left:29.6px;letter-spacing:-1.01px">SLO</span></div>
    <div class="tab" style="left:86px;width:100px"><div class="orb dim" style="left:10.0px"></div><span style="left:29.0px;letter-spacing:1.13px">Instances</span></div>
    <div class="tab" style="left:206px;width:100px"><div class="orb dim" style="left:10.5px"></div><span style="left:30.3px;letter-spacing:-0.73px">CPU</span></div>
    <div class="tab" style="left:288px;width:100px"><div class="orb dim" style="left:9.8px"></div><span style="left:29.3px;letter-spacing:0.77px">Memory</span></div>
    <div class="tab on" style="left:388px;width:91px"><div class="orb" style="left:18px"></div><span style="left:37px;letter-spacing:-0.03px">Redis</span></div>
    <div class="tab" style="left:486px;width:100px"><div class="orb dim" style="left:10.0px"></div><span style="left:29.0px;letter-spacing:0.88px">Logs</span></div>
    <div class="tab" style="left:571px;width:100px"><div class="orb off" style="left:10.0px"></div><span style="left:29.0px;letter-spacing:1.05px">Profiling</span></div>
    <div class="tab" style="left:683px;width:100px"><div class="orb off" style="left:10.0px"></div><span style="left:29.0px;letter-spacing:1.3px">Tracing</span></div>
    <div class="scard" style="top:51px;height:62px">
      <div class="orb" style="left:12px;top:16px"></div>
      <span class="t" style="left:32px;top:12px;font-size:13.5px;font-weight:700;color:#111;line-height:17px;letter-spacing:-0.34px;transform:translate(-0.9px,0.0px)">Redis</span>
      <span class="t" style="left:71px;top:11px;font-size:13px;color:#777;line-height:17px">:</span>
      <span class="t" style="left:81px;top:12px;font-size:13.5px;font-weight:700;color:#3aa640;line-height:17px;letter-spacing:-0.25px;transform:translate(-0.9px,0.0px)">OK</span>
      <span class="t" style="left:31px;top:37px;font-size:12.5px;color:#7a7a7a;line-height:15px;letter-spacing:0.01px;transform:translate(-1.2px,0.0px)">Configure: Connection Configure</span>
      <svg class="abs" style="left:218px;top:38px" width="12" height="12" viewBox="0 0 24 24"><path fill="#8a8a8a" d="M12,15.5A3.5,3.5 0 0,1 8.5,12A3.5,3.5 0 0,1 12,8.5A3.5,3.5 0 0,1 15.5,12A3.5,3.5 0 0,1 12,15.5M19.43,12.97C19.47,12.65 19.5,12.33 19.5,12C19.5,11.67 19.47,11.34 19.43,11L21.54,9.37C21.73,9.22 21.78,8.95 21.66,8.73L19.66,5.27C19.54,5.05 19.27,4.96 19.05,5.05L16.56,6.05C16.04,5.66 15.5,5.32 14.87,5.07L14.5,2.42C14.46,2.18 14.25,2 14,2H10C9.75,2 9.54,2.18 9.5,2.42L9.13,5.07C8.5,5.32 7.96,5.66 7.44,6.05L4.95,5.05C4.73,4.96 4.46,5.05 4.34,5.27L2.34,8.73C2.21,8.95 2.27,9.22 2.46,9.37L4.57,11C4.53,11.34 4.5,11.67 4.5,12C4.5,12.33 4.53,12.65 4.57,12.97L2.46,14.63C2.27,14.78 2.21,15.05 2.34,15.27L4.34,18.73C4.46,18.95 4.73,19.03 4.95,18.95L7.44,17.94C7.96,18.34 8.5,18.68 9.13,18.93L9.5,21.58C9.54,21.82 9.75,22 10,22H14C14.25,22 14.46,21.82 14.5,21.58L14.87,18.93C15.5,18.67 16.04,18.34 16.56,17.94L19.05,18.95C19.27,19.03 19.54,18.95 19.66,18.73L21.66,15.27C21.78,15.05 21.73,14.78 21.54,14.63L19.43,12.97Z"/></svg>
    </div>
    <div class="scard g" style="top:119px;height:60px">
      <div class="orb" style="left:11px;top:16px"></div>
      <span class="ttl" style="left:34px;top:13px;letter-spacing:-0.03px;transform:translate(-0.8px,0.0px)">Redis availability</span>
      <div class="chip mono" style="left:140px;top:12px">OK</div>
      <span class="cond" style="left:29px;top:36px;letter-spacing:0.39px">Condition:</span>
      <span class="condm mono" style="left:89px;top:35px;letter-spacing:0.01px">The number of unavailable redis instances &gt; 0</span>
      <svg class="abs" style="left:411px;top:35px" width="12" height="12" viewBox="0 0 24 24"><path fill="#8a8a8a" d="M12,15.5A3.5,3.5 0 0,1 8.5,12A3.5,3.5 0 0,1 12,8.5A3.5,3.5 0 0,1 15.5,12A3.5,3.5 0 0,1 12,15.5M19.43,12.97C19.47,12.65 19.5,12.33 19.5,12C19.5,11.67 19.47,11.34 19.43,11L21.54,9.37C21.73,9.22 21.78,8.95 21.66,8.73L19.66,5.27C19.54,5.05 19.27,4.96 19.05,5.05L16.56,6.05C16.04,5.66 15.5,5.32 14.87,5.07L14.5,2.42C14.46,2.18 14.25,2 14,2H10C9.75,2 9.54,2.18 9.5,2.42L9.13,5.07C8.5,5.32 7.96,5.66 7.44,6.05L4.95,5.05C4.73,4.96 4.46,5.05 4.34,5.27L2.34,8.73C2.21,8.95 2.27,9.22 2.46,9.37L4.57,11C4.53,11.34 4.5,11.67 4.5,12C4.5,12.33 4.53,12.65 4.57,12.97L2.46,14.63C2.27,14.78 2.21,15.05 2.34,15.27L4.34,18.73C4.46,18.95 4.73,19.03 4.95,18.95L7.44,17.94C7.96,18.34 8.5,18.68 9.13,18.93L9.5,21.58C9.54,21.82 9.75,22 10,22H14C14.25,22 14.46,21.82 14.5,21.58L14.87,18.93C15.5,18.67 16.04,18.34 16.56,17.94L19.05,18.95C19.27,19.03 19.54,18.95 19.66,18.73L21.66,15.27C21.78,15.05 21.73,14.78 21.54,14.63L19.43,12.97Z"/></svg>
    </div>
    <div class="scard g" style="top:186px;height:60px">
      <div class="orb" style="left:11px;top:16px"></div>
      <span class="ttl" style="left:34px;top:13px;letter-spacing:-0.12px;transform:translate(-0.8px,0.0px)">Redis latency</span>
      <div class="chip mono" style="left:120px;top:12px">OK</div>
      <span class="cond" style="left:29px;top:36px;letter-spacing:0.39px;transform:translate(0.0px,-1.0px)">Condition:</span>
      <span class="condm mono" style="left:89px;top:35px;letter-spacing:0.01px">The average command execution time of a redis instance &gt; 5ms</span>
      <svg class="abs" style="left:516px;top:35px" width="12" height="12" viewBox="0 0 24 24"><path fill="#8a8a8a" d="M12,15.5A3.5,3.5 0 0,1 8.5,12A3.5,3.5 0 0,1 12,8.5A3.5,3.5 0 0,1 15.5,12A3.5,3.5 0 0,1 12,15.5M19.43,12.97C19.47,12.65 19.5,12.33 19.5,12C19.5,11.67 19.47,11.34 19.43,11L21.54,9.37C21.73,9.22 21.78,8.95 21.66,8.73L19.66,5.27C19.54,5.05 19.27,4.96 19.05,5.05L16.56,6.05C16.04,5.66 15.5,5.32 14.87,5.07L14.5,2.42C14.46,2.18 14.25,2 14,2H10C9.75,2 9.54,2.18 9.5,2.42L9.13,5.07C8.5,5.32 7.96,5.66 7.44,6.05L4.95,5.05C4.73,4.96 4.46,5.05 4.34,5.27L2.34,8.73C2.21,8.95 2.27,9.22 2.46,9.37L4.57,11C4.53,11.34 4.5,11.67 4.5,12C4.5,12.33 4.53,12.65 4.57,12.97L2.46,14.63C2.27,14.78 2.21,15.05 2.34,15.27L4.34,18.73C4.46,18.95 4.73,19.03 4.95,18.95L7.44,17.94C7.96,18.34 8.5,18.68 9.13,18.93L9.5,21.58C9.54,21.82 9.75,22 10,22H14C14.25,22 14.46,21.82 14.5,21.58L14.87,18.93C15.5,18.67 16.04,18.34 16.56,17.94L19.05,18.95C19.27,19.03 19.54,18.95 19.66,18.73L21.66,15.27C21.78,15.05 21.73,14.78 21.54,14.63L19.43,12.97Z"/></svg>
    </div>
  </div>
  <!-- ============ details ============ -->
  <div class="abs" style="left:18px;top:604px;width:30px;height:30px;border-radius:7px;background:#d7e5f2">
    <svg class="abs" style="left:7px;top:7px" width="16" height="16" viewBox="0 0 24 24"><path fill="#1976d2" d="M15.5,12C18,12 20,14 20,16.5C20,17.38 19.75,18.21 19.31,18.9L22.39,22L21,23.39L17.88,20.32C17.19,20.75 16.37,21 15.5,21C13,21 11,19 11,16.5C11,14 13,12 15.5,12M15.5,14A2.5,2.5 0 0,0 13,16.5A2.5,2.5 0 0,0 15.5,19A2.5,2.5 0 0,0 18,16.5A2.5,2.5 0 0,0 15.5,14M5,3H19C20.11,3 21,3.89 21,5V13.03C20.5,12.23 19.81,11.54 19,11V5H5V19H9.5C9.81,19.75 10.26,20.42 10.81,21H5C3.89,21 3,20.11 3,19V5C3,3.89 3.89,3 5,3M7,7H17V9H7V7M7,11H12.03C11.23,11.5 10.54,12.19 10,13H7V11M7,15H9.17C9.06,15.5 9,16 9,16.5V17H7V15Z"/></svg>
  </div>
  <span class="t" style="left:58px;top:600px;font-size:15.500px;font-weight:700;color:#111;line-height:20px;letter-spacing:0.01px;transform:translate(0.0px,1.0px)">openmaru-apm-redis</span>
  <span class="t" style="left:219px;top:600px;font-size:15.500px;color:#555;line-height:20px;letter-spacing:0.37px">Details</span>
  <span class="t mono" style="left:58px;top:622px;font-size:11.500px;color:#a8a8a8;line-height:14px;letter-spacing:0.02px">ns: openmaru-apm</span>
  <span class="t" style="left:171.500px;top:621px;font-size:14px;color:#a8a8a8;line-height:14px">•</span>
  <span class="t mono" style="left:181px;top:622px;font-size:11.500px;color:#a8a8a8;line-height:14px;letter-spacing:0.04px">kind: Deployment</span>
  <div class="btn" style="left:1537px;top:657px;width:105px;height:22px">
    <svg class="abs" style="left:9px;top:4px" width="12" height="12" viewBox="0 0 24 24"><path fill="#8a8a8a" d="M4,3H20A2,2 0 0,1 22,5V19A2,2 0 0,1 20,21H4A2,2 0 0,1 2,19V5A2,2 0 0,1 4,3M4,7V11H11V7H4M13,7V11H20V7H13M4,13V19H11V13H4M13,13V19H20V13H13Z"/></svg>
    <span class="t" style="left:28px;top:4px;line-height:13px;letter-spacing:0.42px;transform:translate(-1.0px,0.0px)">Collapse</span>
    <svg class="abs" style="left:81px;top:4px" width="13" height="13" viewBox="0 0 24 24"><path fill="#b5b5b5" d="M7.41,15.41L12,10.83L16.59,15.41L18,14L12,8L6,14L7.410,15.41Z"/></svg>
  </div>
  <div id="tbl">
    <div class="hd"></div>
    <span class="th" style="left:17px;letter-spacing:0.80px">INSTANCE</span><span class="th" style="left:788px;letter-spacing:0.34px">ROLE</span><span class="th" style="left:1064px;letter-spacing:1.05px">STATUS</span><span class="th" style="left:1341px;letter-spacing:0.94px">VERSION</span>
    <span class="td" style="left:17px;font-size:14px;-webkit-text-stroke:.25px #111;letter-spacing:0.23px">openmaru-apm-redis-578dfffc75-fj4h8</span>
    <svg class="abs" style="left:788px;top:49px" width="14" height="14" viewBox="0 0 24 24"><path fill="#222" d="M12,3C7.580,3 4,4.790 4,7V17C4,19.210 7.590,21 12,21C12.340,21 12.680,20.990 13.010,20.970L13,19C12.670,19.020 12.340,19 12,19C8.130,19 6,17.500 6,17V14.770C7.610,15.550 9.720,16 12,16C12.650,16 13.270,15.960 13.880,15.890L15.760,14H12C8.130,14 6,12.500 6,12V9.640C7.470,10.470 9.610,11 12,11C14.390,11 16.530,10.470 18,9.640V11.750L20,9.750V7C20,4.790 16.420,3 12,3M12,5C15.870,5 18,6.500 18,7C18,7.500 15.870,9 12,9C8.130,9 6,7.500 6,7C6,6.500 8.130,5 12,5M20.130,12.500L15,17.630V21H18.370L23.500,15.870C23.700,15.670 23.700,15.330 23.500,15.130L20.870,12.500C20.670,12.300 20.330,12.300 20.130,12.500Z"/></svg>
    <span class="td" style="left:807px;letter-spacing:0.41px;transform:translate(0.0px,1.0px)">primary</span>
    <div class="orb" style="left:1063px;top:52px"></div>
    <span class="td" style="left:1081px;letter-spacing:-0.83px;transform:translate(0.0px,1.0px)">Up</span>
    <span class="td" style="left:1341px;letter-spacing:-0.07px;transform:translate(0.0px,1.0px)">7.0.15</span>
    <div class="abs" style="left:0;top:76px;width:100%;height:1px;background:#dad9d5"></div>
    <span class="t" style="left:1141px;top:97px;font-size:12.500px;color:#9a9a9a;line-height:14px;letter-spacing:0.47px">Items per page:</span>
    <div class="abs" style="left:1244px;top:87px;width:90px;height:34px;background:#e8e7e3;border:1px solid #d8d7d3;border-radius:5px">
      <span class="t mono" style="left:10px;top:9px;font-size:12px;color:#9a9a9a;line-height:14px;letter-spacing:-0.41px;transform:translate(0.0px,-1.0px)">50</span>
      <svg class="abs" style="left:70px;top:9px" width="14" height="14" viewBox="0 0 24 24"><path fill="#9a9a9a" d="M6,9.500 L18,9.500 L12,15.500 Z"/></svg>
    </div>
    <span class="t mono" style="left:1382px;top:97px;font-size:12.300px;color:#8a8a8a;line-height:14px;letter-spacing:0.01px">1-1 of 1</span>
    <svg class="abs" style="left:1467px;top:96px" width="16" height="16" viewBox="0 0 24 24"><path fill="#cfcecb" d="M18.410,16.590L13.820,12L18.410,7.410L17,6L11,12L17,18L18.410,16.590M6,6H8V18H6V6Z"/></svg>
    <svg class="abs" style="left:1505px;top:96px" width="16" height="16" viewBox="0 0 24 24"><path fill="#cfcecb" d="M15.410,16.580L10.830,12L15.410,7.410L14,6L8,12L14,18L15.410,16.580Z"/></svg>
    <svg class="abs" style="left:1543px;top:96px" width="16" height="16" viewBox="0 0 24 24"><path fill="#cfcecb" d="M8.590,16.580L13.170,12L8.590,7.410L10,6L16,12L10,18L8.590,16.580Z"/></svg>
    <svg class="abs" style="left:1581px;top:96px" width="16" height="16" viewBox="0 0 24 24"><path fill="#cfcecb" d="M5.590,7.410L10.180,12L5.590,16.590L7,18L13,12L7,6L5.590,7.410M16,6H18V18H16V6Z"/></svg>
  </div>

  <!-- ============ charts ============ -->
  <div class="chart" id="c1" style="left:24px">
    <div class="hdr" style="height:32px"></div>
    <svg class="abs" style="left:13px;top:10px" width="13" height="13" viewBox="0 0 24 24"><path fill="none" stroke="#b0b0b0" stroke-width="1.500" d="M2.500,2 V21.500 H22 M5,2 V19 H22 M7.500,15.500 L11.500,8.500 L14.500,11 L19.500,5.500"/></svg>
    <span class="ctitle" style="left:32px;top:8px;letter-spacing:0.15px">Redis average latency, seconds</span>
    <div class="tools" style="left:670px;top:1px">
        <div style="left:3px"><svg viewBox="0 0 24 24"><rect x="2.500" y="3.500" width="19" height="17" rx="3.500" fill="none" stroke="#e8687f" stroke-width="1.600"/><text x="12" y="16.600" text-anchor="middle" font-family="Liberation Sans, sans-serif" font-size="13.500" fill="#e8687f">AI</text></svg></div>
        <div style="left:27px"><svg viewBox="0 0 24 24"><path fill="#444" d="M15.5,12C18,12 20,14 20,16.5C20,17.38 19.75,18.21 19.31,18.9L22.39,22L21,23.39L17.88,20.32C17.19,20.75 16.37,21 15.5,21C13,21 11,19 11,16.5C11,14 13,12 15.5,12M15.5,14A2.5,2.5 0 0,0 13,16.5A2.5,2.5 0 0,0 15.5,19A2.5,2.5 0 0,0 18,16.5A2.5,2.5 0 0,0 15.5,14M5,3H19C20.11,3 21,3.89 21,5V13.03C20.5,12.23 19.81,11.54 19,11V5H5V19H9.5C9.81,19.75 10.26,20.42 10.81,21H5C3.89,21 3,20.11 3,19V5C3,3.89 3.89,3 5,3M7,7H17V9H7V7M7,11H12.03C11.23,11.5 10.54,12.19 10,13H7V11M7,15H9.17C9.06,15.5 9,16 9,16.5V17H7V15Z"/></svg></div>
        <div style="left:51px"><svg viewBox="0 0 24 24"><path fill="none" stroke="#d29a55" stroke-width="2" stroke-linecap="round" stroke-linejoin="round" d="M3,16.500 L8.500,10.500 L13,14.500 L20.500,7"/><g fill="#d29a55"><circle cx="3" cy="16.500" r="1.700"/><circle cx="8.500" cy="10.500" r="1.700"/><circle cx="13" cy="14.500" r="1.700"/><circle cx="20.500" cy="7" r="1.700"/><circle cx="4" cy="6.500" r="1"/><circle cx="15.500" cy="4.500" r="1"/></g></svg></div>
        <div style="left:75px"><svg viewBox="0 0 24 24"><path fill="none" stroke="#4aa3f0" stroke-width="1.800" d="M3.500,2 V20.500 H21"/><g fill="#4aa3f0"><circle cx="13" cy="6.500" r="2.600"/><circle cx="9" cy="14" r="2.400"/><circle cx="17.500" cy="14.500" r="2.600"/></g></svg></div>
        <div style="left:99px"><svg viewBox="0 0 24 24"><path fill="#444" d="M10,21V19H6.410L10.910,14.500L9.500,13.090L5,17.590V14H3V21H10M14.500,10.910L19,6.410V10H21V3H14V5H17.590L13.090,9.500L14.500,10.910Z"/></svg></div>
      </div>
    <!--C1PLOT--><svg class="abs" style="left:0;top:0" width="801" height="258" viewBox="0 0 801 258"><g stroke="#e5e4e1" stroke-width="1" fill="none"><path d="M65,55.5 H782.5"/><path d="M65,86.5 H782.5"/><path d="M65,117.5 H782.5"/><path d="M65,149.5 H782.5"/><path d="M65,180.5 H782.5"/><path d="M77.5,42 V260"/><path d="M201.5,42 V260"/><path d="M325.5,42 V260"/><path d="M448.5,42 V260"/><path d="M572.5,42 V260"/><path d="M696.5,42 V260"/></g><g stroke="#d6d5d2" stroke-width="1"><path d="M61,55.5 H65"/><path d="M61,86.5 H65"/><path d="M61,117.5 H65"/><path d="M61,149.5 H65"/><path d="M61,180.5 H65"/></g><rect x="65.500" y="42" width="1.300" height="1.300" fill="#6aaed6"/><path d="M65.3,132.4C65.6,130.6 66.4,126.2 67.0,122.5C67.6,118.8 68.0,110.3 68.5,111.9C69.0,113.4 69.5,124.7 70.0,131.0C70.5,137.3 71.0,143.0 71.5,146.8C72.0,150.5 72.3,151.0 72.9,151.7C73.5,152.5 73.8,153.5 74.8,151.2C75.8,148.9 77.4,144.7 78.3,139.0C79.1,133.3 78.9,126.0 79.4,119.6C79.8,113.3 80.3,102.3 80.9,103.8C81.4,105.3 81.8,119.8 82.4,127.9C82.9,136.1 83.3,144.4 83.9,149.1C84.4,153.8 84.7,153.6 85.3,154.1C85.9,154.6 86.2,154.1 87.2,152.1C88.1,150.1 89.8,150.7 90.6,143.1C91.5,135.6 91.3,121.0 91.7,110.2C92.2,99.4 92.7,82.0 93.2,83.2C93.8,84.5 94.2,105.4 94.7,117.3C95.3,129.2 95.7,142.6 96.2,149.3C96.8,155.9 97.0,153.7 97.6,154.2C98.2,154.8 98.6,154.5 99.5,152.3C100.5,150.2 102.2,148.2 103.0,142.4C103.8,136.7 103.6,127.4 104.1,120.1C104.6,112.8 105.1,101.0 105.6,101.9C106.2,102.8 106.6,117.4 107.1,125.3C107.7,133.2 108.1,141.2 108.6,145.7C109.1,150.3 109.4,149.9 110.0,150.7C110.6,151.6 110.9,152.0 111.9,150.5C112.9,148.9 114.6,147.7 115.4,142.0C116.2,136.4 116.0,126.5 116.5,118.9C116.9,111.4 117.4,99.0 118.0,100.0C118.5,101.0 118.9,116.2 119.5,124.4C120.0,132.6 120.5,141.1 121.0,145.8C121.5,150.6 121.8,150.5 122.4,150.8C123.0,151.1 123.3,151.1 124.3,147.7C125.2,144.3 126.9,136.9 127.8,131.8C128.6,126.6 128.4,123.3 128.9,119.1C129.3,115.0 129.8,106.8 130.4,108.7C130.9,110.7 131.3,122.8 131.9,129.8C132.4,136.9 132.8,143.6 133.4,147.7C133.9,151.8 134.2,152.2 134.8,152.7C135.3,153.2 135.7,154.2 136.7,150.3C137.6,146.5 139.3,137.8 140.1,131.4C140.9,125.0 140.8,120.3 141.2,114.8C141.7,109.4 142.2,99.6 142.7,101.3C143.3,103.0 143.7,116.6 144.2,124.4C144.8,132.1 145.2,139.9 145.7,144.4C146.2,148.9 146.5,148.8 147.1,149.4C147.7,150.0 148.1,149.6 149.0,147.9C150.0,146.2 151.7,145.0 152.5,140.0C153.3,135.0 153.1,126.6 153.6,120.1C154.1,113.5 154.5,102.3 155.1,103.8C155.6,105.2 156.0,119.8 156.6,128.0C157.1,136.2 157.6,144.6 158.1,149.4C158.6,154.1 158.9,154.0 159.5,154.3C160.1,154.7 160.4,153.8 161.4,151.1C162.4,148.5 164.0,146.8 164.9,139.7C165.7,132.7 165.5,121.1 166.0,112.1C166.4,103.0 166.9,88.0 167.5,89.5C168.0,90.9 168.4,109.5 169.0,120.2C169.5,130.8 169.9,142.5 170.5,148.4C171.0,154.4 171.3,152.6 171.9,153.4C172.5,154.2 172.8,156.1 173.8,153.0C174.7,149.9 176.4,142.1 177.2,136.3C178.1,130.5 177.9,125.9 178.3,120.8C178.8,115.7 179.3,107.0 179.8,108.1C180.4,109.2 180.8,120.7 181.3,126.9C181.9,133.0 182.3,138.5 182.8,142.2C183.4,145.8 183.6,146.4 184.2,147.2C184.8,147.9 185.2,148.4 186.1,146.5C187.1,144.6 188.8,142.0 189.6,136.8C190.4,131.6 190.2,123.9 190.7,117.6C191.2,111.3 191.7,100.7 192.2,101.9C192.7,103.1 193.2,116.9 193.7,124.4C194.2,132.0 194.7,139.4 195.2,143.8C195.7,148.2 196.0,148.2 196.6,148.8C197.2,149.5 197.5,148.8 198.5,147.4C199.5,146.0 201.1,147.1 202.0,141.0C202.8,134.9 202.6,122.4 203.1,113.3C203.5,104.3 204.0,89.3 204.6,90.7C205.1,92.1 205.5,110.6 206.1,121.2C206.6,131.7 207.0,143.3 207.6,149.2C208.1,155.1 208.4,153.3 209.0,154.2C209.6,155.0 209.9,156.6 210.9,154.0C211.8,151.3 213.5,145.8 214.3,139.7C215.2,133.5 215.0,126.4 215.4,119.9C215.9,113.5 216.4,102.8 216.9,103.8C217.5,104.7 217.9,118.1 218.4,125.2C219.0,132.3 219.4,139.3 219.9,143.4C220.5,147.6 220.7,147.8 221.3,148.4C221.9,149.0 222.3,148.4 223.2,146.8C224.2,145.3 225.9,144.9 226.7,139.8C227.5,134.8 227.3,125.8 227.8,119.0C228.3,112.1 228.8,100.9 229.3,101.9C229.8,102.9 230.3,117.0 230.8,124.7C231.3,132.3 231.8,139.9 232.3,144.3C232.8,148.8 233.1,148.7 233.7,149.3C234.3,149.9 234.6,149.2 235.6,147.6C236.6,146.0 238.3,146.3 239.1,140.5C239.9,134.8 239.7,123.7 240.2,115.5C240.6,107.3 241.1,94.2 241.7,95.1C242.2,95.9 242.6,111.6 243.2,120.2C243.7,128.7 244.2,137.5 244.7,142.4C245.2,147.3 245.5,146.9 246.1,147.4C246.7,147.8 247.0,147.4 248.0,144.7C248.9,142.1 250.6,137.9 251.4,132.7C252.3,127.5 252.1,121.3 252.5,115.8C253.0,110.2 253.5,100.3 254.0,101.9C254.6,103.5 255.0,117.0 255.5,124.7C256.1,132.4 256.5,140.0 257.0,144.4C257.6,148.9 257.9,148.9 258.4,149.4C259.0,150.0 259.4,150.7 260.3,147.5C261.3,144.2 263.0,138.5 263.8,131.4C264.6,124.3 264.5,115.6 264.9,108.0C265.4,100.3 265.9,87.2 266.4,88.8C267.0,90.5 267.4,107.5 267.9,117.2C268.5,127.0 268.9,137.5 269.4,143.0C269.9,148.5 270.2,147.3 270.8,148.0C271.4,148.7 271.8,149.4 272.7,146.9C273.7,144.4 275.4,139.0 276.2,134.2C277.0,129.3 276.8,124.8 277.3,120.2C277.8,115.6 278.2,106.9 278.8,108.7C279.3,110.6 279.7,123.1 280.3,130.3C280.8,137.5 281.3,144.5 281.8,148.7C282.3,152.9 282.6,153.1 283.2,153.7C283.8,154.3 284.1,154.0 285.1,152.1C286.1,150.2 287.7,149.2 288.6,143.1C289.4,137.0 289.2,126.5 289.7,118.4C290.1,110.3 290.6,97.0 291.2,98.2C291.7,99.3 292.1,115.6 292.7,124.7C293.2,133.7 293.6,143.2 294.2,148.4C294.7,153.5 295.0,152.8 295.6,153.4C296.2,153.9 296.5,154.6 297.5,151.5C298.4,148.5 300.1,142.9 300.9,136.4C301.8,130.0 301.6,122.5 302.0,115.7C302.5,109.0 303.0,97.5 303.5,98.8C304.1,100.0 304.5,114.6 305.0,122.7C305.6,130.7 306.0,138.9 306.5,143.6C307.1,148.2 307.3,148.2 307.9,148.5C308.5,148.9 308.9,148.1 309.8,145.7C310.8,143.2 312.5,140.9 313.3,134.9C314.1,128.9 313.9,119.7 314.4,112.3C314.9,104.9 315.4,92.6 315.9,93.8C316.4,95.0 316.9,110.5 317.4,119.2C317.9,127.8 318.4,136.7 318.9,141.6C319.4,146.6 319.7,145.9 320.3,146.6C320.9,147.3 321.2,147.0 322.2,145.4C323.2,143.9 324.8,144.8 325.7,137.9C326.5,131.0 326.3,117.2 326.8,107.2C327.2,97.1 327.7,80.7 328.3,82.0C328.8,83.3 329.2,103.1 329.8,114.3C330.3,125.5 330.7,138.0 331.3,144.2C331.8,150.5 332.1,148.7 332.7,149.2C333.3,149.7 333.6,149.1 334.6,147.1C335.5,145.0 337.2,142.8 338.0,137.7C338.9,132.6 338.7,124.9 339.1,118.7C339.6,112.5 340.1,102.2 340.6,103.1C341.2,104.1 341.6,117.2 342.1,124.2C342.7,131.1 343.1,137.9 343.6,142.0C344.2,146.1 344.4,146.7 345.0,146.9C345.6,147.2 346.0,145.6 346.9,143.4C347.9,141.2 349.6,139.3 350.4,134.8C351.2,130.4 351.0,123.8 351.5,118.4C352.0,113.1 352.5,103.7 353.0,105.0C353.6,106.4 354.0,119.0 354.5,125.9C355.1,132.9 355.5,139.5 356.0,143.6C356.5,147.7 356.8,147.7 357.4,148.6C358.0,149.4 358.3,151.1 359.3,148.3C360.3,145.6 362.0,143.2 362.8,133.3C363.6,123.5 363.4,106.5 363.9,93.5C364.3,80.4 364.8,59.1 365.4,60.8C365.9,62.6 366.3,88.1 366.9,103.0C367.4,118.0 367.9,135.5 368.4,143.8C368.9,152.0 369.2,148.5 369.8,148.7C370.4,149.0 370.7,147.5 371.7,145.0C372.6,142.6 374.3,138.4 375.1,135.3C376.0,132.1 375.8,130.0 376.2,127.5C376.7,125.0 377.2,119.6 377.8,121.2C378.3,122.7 378.7,131.4 379.2,136.0C379.8,140.7 380.2,144.2 380.8,147.1C381.3,150.0 381.6,151.5 382.1,152.1C382.7,152.8 383.1,152.6 384.1,150.7C385.0,148.8 386.7,145.9 387.5,141.5C388.3,137.1 388.2,131.2 388.6,126.2C389.1,121.2 389.6,112.4 390.1,113.7C390.7,115.0 391.1,126.9 391.6,133.3C392.2,139.8 392.6,145.8 393.1,149.6C393.6,153.4 393.9,154.0 394.5,154.6C395.1,155.1 395.5,156.5 396.4,152.8C397.4,149.1 399.1,140.6 399.9,134.0C400.7,127.5 400.5,122.1 401.0,116.4C401.5,110.6 401.9,100.0 402.5,101.9C403.0,103.8 403.4,118.3 404.0,126.8C404.5,135.2 405.0,143.9 405.5,148.7C406.0,153.5 406.3,152.8 406.9,153.7C407.5,154.5 407.8,156.2 408.8,153.5C409.8,150.8 411.4,145.7 412.3,138.7C413.1,131.7 412.9,122.6 413.4,114.7C413.8,106.8 414.3,93.5 414.9,95.1C415.4,96.6 415.8,113.5 416.4,123.1C416.9,132.8 417.3,143.1 417.9,148.6C418.4,154.1 418.7,152.8 419.3,153.6C419.9,154.3 420.2,155.4 421.2,152.6C422.1,149.8 423.8,144.3 424.6,138.0C425.5,131.7 425.3,124.2 425.7,117.5C426.2,110.7 426.7,99.7 427.2,100.7C427.8,101.6 428.2,115.3 428.7,122.7C429.3,130.1 429.7,137.4 430.2,141.7C430.8,146.0 431.0,145.8 431.6,146.6C432.2,147.5 432.6,148.7 433.5,146.3C434.5,144.0 436.2,138.6 437.0,133.4C437.8,128.2 437.6,122.7 438.1,117.4C438.6,112.2 439.1,102.8 439.6,104.4C440.1,105.9 440.6,118.9 441.1,126.1C441.6,133.4 442.1,140.4 442.6,144.7C443.1,148.9 443.4,149.3 444.0,149.6C444.6,149.9 444.9,148.4 445.9,146.3C446.9,144.3 448.5,146.5 449.4,138.4C450.2,130.3 450.0,113.4 450.5,101.2C450.9,89.1 451.4,69.7 452.0,70.8C452.5,71.9 452.9,94.5 453.5,107.2C454.0,120.0 454.4,134.6 455.0,141.7C455.5,148.8 455.8,146.0 456.4,146.7C457.0,147.4 457.3,148.4 458.3,145.7C459.2,143.0 460.9,136.5 461.7,131.7C462.6,126.9 462.4,123.2 462.8,119.1C463.3,114.9 463.8,106.9 464.3,108.7C464.9,110.6 465.3,122.4 465.8,129.2C466.4,136.0 466.8,142.5 467.3,146.4C467.9,150.4 468.1,151.1 468.7,151.4C469.3,151.7 469.7,150.1 470.6,148.1C471.6,146.2 473.3,146.8 474.1,140.7C474.9,134.6 474.7,122.9 475.2,114.2C475.7,105.6 476.2,91.2 476.7,92.6C477.3,93.9 477.7,111.7 478.2,121.8C478.8,131.8 479.2,142.7 479.7,148.4C480.2,154.1 480.5,152.6 481.1,153.4C481.7,154.1 482.0,155.8 483.0,152.7C484.0,149.6 485.7,142.2 486.5,136.2C487.3,130.3 487.1,124.9 487.6,119.4C488.0,113.9 488.5,104.1 489.1,105.6C489.6,107.2 490.0,120.6 490.6,128.2C491.1,135.7 491.6,143.2 492.1,147.6C492.6,152.0 492.9,152.0 493.5,152.6C494.1,153.2 494.4,153.3 495.4,150.8C496.3,148.2 498.0,144.0 498.9,138.4C499.7,132.8 499.5,125.8 500.0,119.7C500.4,113.6 500.9,103.0 501.5,104.4C502.0,105.8 502.4,119.7 503.0,127.4C503.5,135.1 503.9,142.9 504.5,147.3C505.0,151.8 505.3,151.4 505.9,152.3C506.4,153.2 506.8,156.0 507.8,152.3C508.7,148.6 510.4,141.5 511.2,131.7C512.0,122.0 511.9,109.2 512.3,98.2C512.8,87.2 513.3,68.8 513.8,70.8C514.4,72.8 514.8,95.9 515.3,109.5C515.9,123.1 516.3,138.8 516.8,146.3C517.3,153.9 517.6,150.8 518.2,151.3C518.8,151.8 519.2,152.0 520.1,149.2C521.1,146.4 522.8,142.5 523.6,135.9C524.4,129.3 524.2,120.3 524.7,112.7C525.2,105.2 525.7,92.5 526.2,93.8C526.7,95.1 527.2,111.1 527.7,120.0C528.2,128.9 528.7,138.2 529.2,143.4C529.7,148.5 530.0,147.8 530.6,148.3C531.2,148.9 531.5,149.3 532.5,146.4C533.5,143.5 535.1,141.4 536.0,132.4C536.8,123.3 536.6,108.0 537.1,96.1C537.5,84.2 538.0,64.7 538.6,66.4C539.1,68.2 539.5,91.9 540.1,105.8C540.6,119.7 541.0,135.8 541.6,143.5C542.1,151.2 542.4,147.6 543.0,148.5C543.6,149.3 543.9,150.9 544.9,148.3C545.8,145.6 547.5,139.9 548.3,133.6C549.2,127.4 549.0,120.1 549.4,113.5C549.9,106.8 550.4,95.5 550.9,96.9C551.5,98.3 551.9,113.0 552.4,121.2C553.0,129.4 553.4,137.8 553.9,142.5C554.5,147.3 554.7,147.2 555.3,147.5C555.9,147.8 556.3,145.2 557.2,144.2C558.2,143.3 559.9,147.1 560.7,142.3C561.5,137.5 561.3,125.7 561.8,117.7C562.3,109.6 562.8,96.5 563.3,97.5C563.8,98.5 564.3,114.5 564.8,123.3C565.3,132.0 565.8,141.1 566.3,146.1C566.8,151.1 567.1,150.5 567.7,151.1C568.3,151.7 568.6,151.1 569.6,149.6C570.6,148.1 572.2,148.2 573.1,142.7C573.9,137.3 573.7,126.9 574.2,119.2C574.6,111.6 575.1,99.3 575.7,100.0C576.2,100.8 576.6,115.6 577.2,123.5C577.7,131.4 578.1,139.3 578.7,143.9C579.2,148.4 579.5,148.0 580.1,148.9C580.7,149.7 581.0,150.3 582.0,148.6C582.9,146.9 584.6,144.2 585.4,139.3C586.3,134.5 586.1,127.3 586.5,121.5C587.0,115.6 587.5,105.5 588.0,106.9C588.6,108.2 589.0,121.6 589.5,128.9C590.1,136.3 590.5,143.5 591.0,147.8C591.6,152.1 591.8,152.0 592.4,152.8C593.0,153.6 593.4,154.2 594.3,152.2C595.3,150.2 597.0,147.3 597.8,141.7C598.6,136.0 598.4,127.7 598.9,120.8C599.4,114.0 599.9,102.5 600.4,103.8C600.9,105.1 601.4,119.8 601.9,128.0C602.4,136.2 602.9,144.6 603.4,149.3C603.9,154.0 604.2,153.4 604.8,154.3C605.4,155.2 605.7,156.3 606.7,154.3C607.7,152.3 609.4,149.3 610.2,143.3C611.0,137.2 610.8,128.2 611.3,120.9C611.7,113.5 612.2,101.4 612.8,102.5C613.3,103.7 613.7,118.8 614.3,127.1C614.8,135.5 615.3,144.0 615.8,148.8C616.3,153.6 616.6,153.2 617.2,153.8C617.8,154.5 618.1,154.6 619.1,152.5C620.0,150.3 621.7,146.9 622.5,141.7C623.4,136.5 623.2,129.5 623.6,123.6C624.1,117.6 624.6,108.1 625.1,108.7C625.7,109.3 626.1,121.0 626.6,126.9C627.2,132.8 627.6,138.1 628.1,141.6C628.7,145.2 629.0,146.1 629.5,146.6C630.1,147.1 630.5,145.7 631.4,144.3C632.4,143.0 634.1,145.3 634.9,139.0C635.7,132.8 635.6,119.1 636.0,109.4C636.5,99.7 637.0,83.7 637.5,85.1C638.1,86.6 638.5,106.2 639.0,117.4C639.6,128.6 640.0,141.1 640.5,147.4C641.0,153.7 641.3,151.8 641.9,152.4C642.5,153.1 642.9,154.9 643.8,151.1C644.8,147.3 646.5,136.5 647.3,131.2C648.1,126.0 647.9,125.0 648.4,121.9C648.9,118.9 649.4,112.3 649.9,114.3C650.4,116.4 650.9,127.0 651.4,133.2C651.9,139.4 652.4,145.0 652.9,148.6C653.4,152.3 653.7,153.3 654.3,153.6C654.9,153.9 655.2,152.5 656.2,150.5C657.2,148.5 658.8,148.3 659.7,142.5C660.5,136.7 660.3,126.1 660.8,118.1C661.2,110.1 661.7,97.2 662.3,98.2C662.8,99.1 663.2,114.7 663.8,123.3C664.3,131.8 664.7,140.6 665.3,145.4C665.8,150.3 666.1,149.9 666.7,150.4C667.3,151.0 667.6,150.4 668.6,148.6C669.5,146.8 671.2,144.5 672.0,140.3C672.9,136.0 672.7,130.0 673.1,125.0C673.6,120.0 674.1,111.2 674.6,112.5C675.2,113.8 675.6,125.8 676.1,132.3C676.7,138.9 677.1,145.0 677.6,148.8C678.2,152.7 678.4,153.2 679.0,153.8C679.6,154.5 680.0,154.4 680.9,152.5C681.9,150.6 683.6,149.1 684.4,143.3C685.2,137.5 685.0,127.7 685.5,120.2C686.0,112.6 686.5,100.7 687.0,101.3C687.5,101.8 688.0,115.9 688.5,123.2C689.0,130.6 689.5,137.8 690.0,142.1C690.5,146.3 690.8,146.2 691.4,147.0C692.0,147.8 692.3,147.4 693.3,146.4C694.3,145.5 695.9,146.7 696.8,141.8C697.6,136.8 697.4,126.3 697.9,118.8C698.3,111.3 698.8,99.5 699.4,100.0C699.9,100.6 700.3,114.7 700.9,122.0C701.4,129.4 701.8,136.6 702.4,140.9C702.9,145.2 703.2,145.4 703.8,145.9C704.4,146.4 704.7,145.5 705.7,143.9C706.6,142.3 708.3,142.6 709.1,137.0C710.0,131.4 709.8,120.6 710.2,112.6C710.7,104.6 711.2,91.2 711.7,92.6C712.3,93.9 712.7,110.6 713.2,120.0C713.8,129.4 714.2,139.4 714.7,144.7C715.3,150.1 715.5,148.8 716.1,149.7C716.7,150.6 717.1,152.3 718.0,149.6C719.0,146.9 720.7,139.4 721.5,134.9C722.3,130.4 722.1,128.0 722.6,124.6C723.1,121.3 723.6,115.2 724.1,116.2C724.6,117.2 725.1,125.9 725.6,130.3C726.1,134.7 726.6,137.9 727.1,140.7C727.6,143.4 727.9,145.3 728.5,145.6C729.1,146.0 729.4,143.2 730.4,142.4C731.4,141.7 733.1,146.6 733.9,141.5C734.7,136.4 734.5,123.2 735.0,114.2C735.4,105.3 735.9,90.7 736.5,91.9C737.0,93.2 737.4,111.0 738.0,120.9C738.5,130.9 739.0,141.7 739.5,147.4C740.0,153.0 740.3,151.7 740.9,152.3C741.5,153.0 741.8,154.3 742.8,151.0C743.7,147.6 745.4,139.8 746.2,133.9C747.1,128.0 746.9,123.4 747.3,118.3C747.8,113.3 748.3,104.3 748.8,105.6C749.4,107.0 749.8,119.1 750.3,125.8C750.9,132.4 751.3,138.7 751.8,142.6C752.4,146.5 752.7,147.0 753.2,147.6C753.8,148.1 754.2,148.1 755.1,145.6C756.1,143.0 757.8,138.2 758.6,133.5C759.4,128.8 759.3,124.1 759.7,119.5C760.2,115.0 760.7,106.4 761.2,108.1C761.8,109.8 762.2,122.1 762.7,129.0C763.3,136.0 763.7,142.6 764.2,146.7C764.7,150.8 765.0,150.9 765.6,151.7C766.2,152.4 766.6,154.1 767.5,150.9C768.5,147.6 770.2,138.4 771.0,133.5C771.8,128.7 771.6,127.1 772.1,124.0C772.6,120.9 773.0,115.1 773.6,116.2C774.1,117.3 774.5,125.9 775.1,130.3C775.6,134.7 776.1,137.9 776.6,140.6C777.1,143.4 777.4,145.3 778.0,145.6C778.6,145.9 779.1,145.2 779.9,142.4C780.7,139.6 782.1,132.1 782.6,129.9" fill="none" stroke="#6aaed6" stroke-width="1.300" stroke-linejoin="round"/></svg>
    <span class="yl" style="left:6px;top:47.8px">3µs</span><span class="yl" style="left:6px;top:78.9px">2.5µs</span><span class="yl" style="left:6px;top:110.0px">2µs</span><span class="yl" style="left:6px;top:141.0px">1.5µs</span><span class="yl" style="left:6px;top:172.2px">1µs</span><!--/C1PLOT-->
  </div>
  <div class="chart" id="c2" style="left:836px">
    <div class="hdr" style="height:37px"></div>
    <svg class="abs" style="left:13px;top:12px" width="13" height="13" viewBox="0 0 24 24"><path fill="none" stroke="#b0b0b0" stroke-width="1.500" d="M2.500,2 V21.500 H22 M5,2 V19 H22 M7.500,15.500 L11.500,8.500 L14.500,11 L19.500,5.500"/></svg>
    <span class="ctitle" style="left:32px;top:10px;letter-spacing:0.02px">Redis queries on</span>
    <div class="abs" style="left:149px;top:8px;width:183px;height:22px;background:#e9e8e5;border:1px solid #b9b8b5;border-radius:4px;box-shadow:0 1.500px 2px rgba(0,0,0,.28)">
      <span class="t" style="left:9px;top:3px;font-size:12px;color:#1a1a1a;line-height:15px;letter-spacing:0.04px">openmaru-apm-redis-57···</span>
      <svg class="abs" style="left:163px;top:4px" width="12" height="12" viewBox="0 0 24 24"><path fill="#8a8a8a" d="M6,9 L18,9 L12,15 Z"/></svg>
    </div>
    <span class="ctitle" style="left:343px;top:10px;letter-spacing:0.12px">, per seconds</span>
    <div class="tools" style="left:670px;top:4px">
        <div style="left:3px"><svg viewBox="0 0 24 24"><rect x="2.500" y="3.500" width="19" height="17" rx="3.500" fill="none" stroke="#e8687f" stroke-width="1.600"/><text x="12" y="16.600" text-anchor="middle" font-family="Liberation Sans, sans-serif" font-size="13.500" fill="#e8687f">AI</text></svg></div>
        <div style="left:27px"><svg viewBox="0 0 24 24"><path fill="#444" d="M15.5,12C18,12 20,14 20,16.5C20,17.38 19.75,18.21 19.31,18.9L22.39,22L21,23.39L17.88,20.32C17.19,20.75 16.37,21 15.5,21C13,21 11,19 11,16.5C11,14 13,12 15.5,12M15.5,14A2.5,2.5 0 0,0 13,16.5A2.5,2.5 0 0,0 15.5,19A2.5,2.5 0 0,0 18,16.5A2.5,2.5 0 0,0 15.5,14M5,3H19C20.11,3 21,3.89 21,5V13.03C20.5,12.23 19.81,11.54 19,11V5H5V19H9.5C9.81,19.75 10.26,20.42 10.81,21H5C3.89,21 3,20.11 3,19V5C3,3.89 3.89,3 5,3M7,7H17V9H7V7M7,11H12.03C11.23,11.5 10.54,12.19 10,13H7V11M7,15H9.17C9.06,15.5 9,16 9,16.5V17H7V15Z"/></svg></div>
        <div style="left:51px"><svg viewBox="0 0 24 24"><path fill="none" stroke="#d29a55" stroke-width="2" stroke-linecap="round" stroke-linejoin="round" d="M3,16.500 L8.500,10.500 L13,14.500 L20.500,7"/><g fill="#d29a55"><circle cx="3" cy="16.500" r="1.700"/><circle cx="8.500" cy="10.500" r="1.700"/><circle cx="13" cy="14.500" r="1.700"/><circle cx="20.500" cy="7" r="1.700"/><circle cx="4" cy="6.500" r="1"/><circle cx="15.500" cy="4.500" r="1"/></g></svg></div>
        <div style="left:75px"><svg viewBox="0 0 24 24"><path fill="none" stroke="#4aa3f0" stroke-width="1.800" d="M3.500,2 V20.500 H21"/><g fill="#4aa3f0"><circle cx="13" cy="6.500" r="2.600"/><circle cx="9" cy="14" r="2.400"/><circle cx="17.500" cy="14.500" r="2.600"/></g></svg></div>
        <div style="left:99px"><svg viewBox="0 0 24 24"><path fill="#444" d="M10,21V19H6.410L10.910,14.500L9.500,13.090L5,17.590V14H3V21H10M14.500,10.910L19,6.410V10H21V3H14V5H17.590L13.090,9.500L14.500,10.910Z"/></svg></div>
      </div>
    <!--C2PLOT--><svg class="abs" style="left:0;top:0" width="801" height="258" viewBox="0 0 801 258"><g stroke="#e5e4e1" stroke-width="1" fill="none"><path d="M65,68.5 H783"/><path d="M65,94.5 H783"/><path d="M65,119.5 H783"/><path d="M65,145.5 H783"/><path d="M65,170.5 H783"/><path d="M65,196.5 H783"/><path d="M77.5,48 V260"/><path d="M201.5,48 V260"/><path d="M325.5,48 V260"/><path d="M448.5,48 V260"/><path d="M572.5,48 V260"/><path d="M695.5,48 V260"/></g><g stroke="#d6d5d2" stroke-width="1"><path d="M61,68.5 H65"/><path d="M61,94.5 H65"/><path d="M61,119.5 H65"/><path d="M61,145.5 H65"/><path d="M61,170.5 H65"/><path d="M61,196.5 H65"/></g><rect x="65.500" y="47.500" width="1.300" height="1.300" fill="#6aaed6"/><clipPath id="c2clip"><rect x="65.0" y="0" width="717.8" height="260"/></clipPath><path d="M65.0,200 L65.0,119.2 L67.2,165.1 L68.0,165.1 L69.8,117.7 L71.2,69.2 L71.7,68.2 L74.8,68.2 L75.3,69.7 L76.8,92.7 L78.2,119.2 L79.5,144.7 L80.4,165.1 L82.2,117.7 L83.5,69.2 L84.0,68.2 L87.2,68.2 L87.7,69.7 L89.1,92.7 L90.6,119.2 L91.8,144.7 L92.8,165.1 L94.6,117.7 L95.9,69.2 L96.4,68.2 L99.6,68.2 L100.1,69.7 L101.5,92.7 L103.0,119.2 L104.2,144.7 L105.2,165.1 L107.0,117.7 L108.3,69.2 L108.8,68.2 L112.0,68.2 L112.5,69.7 L113.9,92.7 L115.4,119.2 L116.6,144.7 L117.5,165.1 L119.3,117.7 L120.6,69.2 L121.1,68.2 L124.3,68.2 L124.8,69.7 L126.2,92.7 L127.7,119.2 L128.9,144.7 L129.9,165.1 L131.7,117.7 L133.0,69.2 L133.5,68.2 L136.7,68.2 L137.2,69.7 L138.6,92.7 L140.1,119.2 L141.3,144.7 L142.3,165.1 L144.1,117.7 L145.4,69.2 L145.9,68.2 L149.1,68.2 L149.6,69.7 L151.0,92.7 L152.5,119.2 L153.7,144.7 L154.6,165.1 L156.4,117.7 L157.7,69.2 L158.2,68.2 L161.4,68.2 L161.9,69.7 L163.3,92.7 L164.8,119.2 L166.0,144.7 L167.0,165.1 L168.8,117.7 L170.1,69.2 L170.6,68.2 L173.8,68.2 L174.3,69.7 L175.7,92.7 L177.2,119.2 L178.4,144.7 L179.4,165.1 L181.2,117.7 L182.5,69.2 L183.0,68.2 L186.2,68.2 L186.7,69.7 L188.1,92.7 L189.6,119.2 L190.8,144.7 L191.8,165.1 L193.6,117.7 L194.9,69.2 L195.4,68.2 L198.6,68.2 L199.1,69.7 L200.5,92.7 L202.0,119.2 L203.2,144.7 L204.1,165.1 L205.9,117.7 L207.2,69.2 L207.7,68.2 L210.9,68.2 L211.4,69.7 L212.8,92.7 L214.3,119.2 L215.5,144.7 L216.5,165.1 L218.3,117.7 L219.6,69.2 L220.1,68.2 L223.3,68.2 L223.8,69.7 L225.2,92.7 L226.7,119.2 L227.9,144.7 L228.9,165.1 L230.7,117.7 L232.0,69.2 L232.5,68.2 L235.7,68.2 L236.2,69.7 L237.6,92.7 L239.1,119.2 L240.3,144.7 L241.2,165.1 L243.0,117.7 L244.3,69.2 L244.8,68.2 L248.0,68.2 L248.5,69.7 L249.9,92.7 L251.4,119.2 L252.6,144.7 L253.6,165.1 L255.4,117.7 L256.7,69.2 L257.2,68.2 L260.4,68.2 L260.9,69.7 L262.3,92.7 L263.8,119.2 L265.0,144.7 L266.0,165.1 L267.8,117.7 L269.1,69.2 L269.6,68.2 L272.8,68.2 L273.3,69.7 L274.7,92.7 L276.2,119.2 L277.4,144.7 L278.3,165.1 L280.1,117.7 L281.4,69.2 L281.9,68.2 L285.1,68.2 L285.6,69.7 L287.0,92.7 L288.5,119.2 L289.7,144.7 L290.7,165.1 L292.5,117.7 L293.8,69.2 L294.3,68.2 L297.5,68.2 L298.0,69.7 L299.4,92.7 L300.9,119.2 L302.1,144.7 L303.1,165.1 L304.9,117.7 L306.2,69.2 L306.7,68.2 L309.9,68.2 L310.4,69.7 L311.8,92.7 L313.3,119.2 L314.5,144.7 L315.5,165.1 L317.3,117.7 L318.6,69.2 L319.1,68.2 L322.3,68.2 L322.8,69.7 L324.2,92.7 L325.7,119.2 L326.9,144.7 L327.8,165.1 L329.6,117.7 L330.9,69.2 L331.4,68.2 L334.6,68.2 L335.1,69.7 L336.5,92.7 L338.0,119.2 L339.2,144.7 L340.2,165.1 L342.0,117.7 L343.3,69.2 L343.8,68.2 L347.0,68.2 L347.5,69.7 L348.9,92.7 L350.4,119.2 L351.6,144.7 L352.6,165.1 L354.4,117.7 L355.7,69.2 L356.2,68.2 L359.4,68.2 L359.9,69.7 L361.3,92.7 L362.8,119.2 L364.0,144.7 L364.9,165.1 L366.7,117.7 L368.0,69.2 L368.5,68.2 L371.7,68.2 L372.2,69.7 L373.6,92.7 L375.1,119.2 L376.3,144.7 L377.3,165.1 L379.1,117.7 L380.4,69.2 L380.9,68.2 L384.1,68.2 L384.6,69.7 L386.0,92.7 L387.5,119.2 L388.7,144.7 L389.7,165.1 L391.5,117.7 L392.8,69.2 L393.3,68.2 L396.5,68.2 L397.0,69.7 L398.4,92.7 L399.9,119.2 L401.1,144.7 L402.0,165.1 L403.8,117.7 L405.1,69.2 L405.6,68.2 L408.8,68.2 L409.3,69.7 L410.7,92.7 L412.2,119.2 L413.4,144.7 L414.4,165.1 L416.2,117.7 L417.5,69.2 L418.0,68.2 L421.2,68.2 L421.7,69.7 L423.1,92.7 L424.6,119.2 L425.8,144.7 L426.8,165.1 L428.6,117.7 L429.9,69.2 L430.4,68.2 L433.6,68.2 L434.1,69.7 L435.5,92.7 L437.0,119.2 L438.2,144.7 L439.1,165.1 L440.9,117.7 L442.2,69.2 L442.7,68.2 L445.9,68.2 L446.4,69.7 L447.8,92.7 L449.3,119.2 L450.5,144.7 L451.5,165.1 L453.3,117.7 L454.6,69.2 L455.1,68.2 L458.3,68.2 L458.8,69.7 L460.2,92.7 L461.7,119.2 L462.9,144.7 L463.9,165.1 L465.7,117.7 L467.0,69.2 L467.5,68.2 L470.7,68.2 L471.2,69.7 L472.6,92.7 L474.1,119.2 L475.3,144.7 L476.3,165.1 L478.1,117.7 L479.4,69.2 L479.9,68.2 L483.1,68.2 L483.6,69.7 L485.0,92.7 L486.5,119.2 L487.7,144.7 L488.6,165.1 L490.4,117.7 L491.7,69.2 L492.2,68.2 L495.4,68.2 L495.9,69.7 L497.3,92.7 L498.8,119.2 L500.0,144.7 L501.0,165.1 L502.8,117.7 L504.1,69.2 L504.6,68.2 L507.8,68.2 L508.3,69.7 L509.7,92.7 L511.2,119.2 L512.4,144.7 L513.4,165.1 L515.2,117.7 L516.5,69.2 L517.0,68.2 L520.2,68.2 L520.7,69.7 L522.1,92.7 L523.6,119.2 L524.8,144.7 L525.7,165.1 L527.5,117.7 L528.8,69.2 L529.3,68.2 L532.5,68.2 L533.0,69.7 L534.4,92.7 L535.9,119.2 L537.1,144.7 L538.1,165.1 L539.9,117.7 L541.2,69.2 L541.7,68.2 L544.9,68.2 L545.4,69.7 L546.8,92.7 L548.3,119.2 L549.5,144.7 L550.5,165.1 L552.3,117.7 L553.6,69.2 L554.1,68.2 L557.3,68.2 L557.8,69.7 L559.2,92.7 L560.7,119.2 L561.9,144.7 L562.8,165.1 L564.6,117.7 L565.9,69.2 L566.4,68.2 L569.6,68.2 L570.1,69.7 L571.5,92.7 L573.0,119.2 L574.2,144.7 L575.2,165.1 L577.0,117.7 L578.3,69.2 L578.8,68.2 L582.0,68.2 L582.5,69.7 L583.9,92.7 L585.4,119.2 L586.6,144.7 L587.6,165.1 L589.4,117.7 L590.7,69.2 L591.2,68.2 L594.4,68.2 L594.9,69.7 L596.3,92.7 L597.8,119.2 L599.0,144.7 L600.0,165.1 L601.8,117.7 L603.1,69.2 L603.6,68.2 L606.8,68.2 L607.3,69.7 L608.7,92.7 L610.2,119.2 L611.4,144.7 L612.3,165.1 L614.1,117.7 L615.4,69.2 L615.9,68.2 L619.1,68.2 L619.6,69.7 L621.0,92.7 L622.5,119.2 L623.7,144.7 L624.7,165.1 L626.5,117.7 L627.8,69.2 L628.3,68.2 L631.5,68.2 L632.0,69.7 L633.4,92.7 L634.9,119.2 L636.1,144.7 L637.1,165.1 L638.9,117.7 L640.2,69.2 L640.7,68.2 L643.9,68.2 L644.4,69.7 L645.8,92.7 L647.3,119.2 L648.5,144.7 L649.4,165.1 L651.2,117.7 L652.5,69.2 L653.0,68.2 L656.2,68.2 L656.7,69.7 L658.1,92.7 L659.6,119.2 L660.8,144.7 L661.8,165.1 L663.6,117.7 L664.9,69.2 L665.4,68.2 L668.6,68.2 L669.1,69.7 L670.5,92.7 L672.0,119.2 L673.2,144.7 L674.2,165.1 L676.0,117.7 L677.3,69.2 L677.8,68.2 L681.0,68.2 L681.5,69.7 L682.9,92.7 L684.4,119.2 L685.6,144.7 L686.5,165.1 L688.4,117.7 L689.6,69.2 L690.1,68.2 L693.4,68.2 L693.9,69.7 L695.2,92.7 L696.8,119.2 L698.0,144.7 L698.9,165.1 L700.7,117.7 L702.0,69.2 L702.5,68.2 L705.7,68.2 L706.2,69.7 L707.6,92.7 L709.1,119.2 L710.3,144.7 L711.3,165.1 L713.1,117.7 L714.4,69.2 L714.9,68.2 L718.1,68.2 L718.6,69.7 L720.0,92.7 L721.5,119.2 L722.7,144.7 L723.7,165.1 L725.5,117.7 L726.8,69.2 L727.3,68.2 L730.5,68.2 L731.0,69.7 L732.4,92.7 L733.9,119.2 L735.1,144.7 L736.0,165.1 L737.8,117.7 L739.1,69.2 L739.6,68.2 L742.8,68.2 L743.3,69.7 L744.7,92.7 L746.2,119.2 L747.4,144.7 L748.4,165.1 L750.2,117.7 L751.5,69.2 L752.0,68.2 L755.2,68.2 L755.7,69.7 L757.1,92.7 L758.6,119.2 L759.8,144.7 L760.8,165.1 L762.6,117.7 L763.9,69.2 L764.4,68.2 L767.6,68.2 L768.1,69.7 L769.5,92.7 L771.0,119.2 L772.2,144.7 L773.1,165.1 L774.9,117.7 L776.2,69.2 L776.7,68.2 L779.9,68.2 L780.4,69.7 L781.8,92.7 L783.3,119.2 L784.5,144.7 L787.5,165.1 L790.8,200 Z" fill="#72afd2" clip-path="url(#c2clip)"/><path d="M65.0,200 L65.0,185.6 L67.2,211.1 L68.0,231.5 L69.5,195.8 L70.8,160.0 L71.2,150.9 L71.8,149.8 L74.5,149.8 L75.2,151.4 L76.5,158.5 L77.8,170.2 L78.7,183.0 L79.2,195.8 L79.8,213.6 L80.4,231.5 L81.9,195.8 L83.1,160.0 L83.6,150.9 L84.1,149.8 L86.9,149.8 L87.5,151.4 L88.8,158.5 L90.1,170.2 L91.0,183.0 L91.6,195.8 L92.2,213.6 L92.8,231.5 L94.3,195.8 L95.5,160.0 L96.0,150.9 L96.5,149.8 L99.3,149.8 L99.9,151.4 L101.2,158.5 L102.5,170.2 L103.4,183.0 L104.0,195.8 L104.6,213.6 L105.2,231.5 L106.7,195.8 L107.9,160.0 L108.4,150.9 L108.9,149.8 L111.7,149.8 L112.3,151.4 L113.6,158.5 L114.9,170.2 L115.8,183.0 L116.4,195.8 L117.0,213.6 L117.5,231.5 L119.0,195.8 L120.2,160.0 L120.7,150.9 L121.2,149.8 L124.0,149.8 L124.6,151.4 L125.9,158.5 L127.2,170.2 L128.1,183.0 L128.7,195.8 L129.3,213.6 L129.9,231.5 L131.4,195.8 L132.6,160.0 L133.1,150.9 L133.6,149.8 L136.4,149.8 L137.0,151.4 L138.3,158.5 L139.6,170.2 L140.5,183.0 L141.1,195.8 L141.7,213.6 L142.3,231.5 L143.8,195.8 L145.0,160.0 L145.5,150.9 L146.0,149.8 L148.8,149.8 L149.4,151.4 L150.7,158.5 L152.0,170.2 L152.9,183.0 L153.5,195.8 L154.1,213.6 L154.6,231.5 L156.1,195.8 L157.3,160.0 L157.8,150.9 L158.3,149.8 L161.1,149.8 L161.7,151.4 L163.0,158.5 L164.3,170.2 L165.2,183.0 L165.8,195.8 L166.4,213.6 L167.0,231.5 L168.5,195.8 L169.7,160.0 L170.2,150.9 L170.7,149.8 L173.5,149.8 L174.1,151.4 L175.4,158.5 L176.7,170.2 L177.6,183.0 L178.2,195.8 L178.8,213.6 L179.4,231.5 L180.9,195.8 L182.1,160.0 L182.6,150.9 L183.1,149.8 L185.9,149.8 L186.5,151.4 L187.8,158.5 L189.1,170.2 L190.0,183.0 L190.6,195.8 L191.2,213.6 L191.8,231.5 L193.3,195.8 L194.5,160.0 L195.0,150.9 L195.5,149.8 L198.3,149.8 L198.9,151.4 L200.2,158.5 L201.5,170.2 L202.4,183.0 L203.0,195.8 L203.6,213.6 L204.1,231.5 L205.6,195.8 L206.8,160.0 L207.3,150.9 L207.8,149.8 L210.6,149.8 L211.2,151.4 L212.5,158.5 L213.8,170.2 L214.7,183.0 L215.3,195.8 L215.9,213.6 L216.5,231.5 L218.0,195.8 L219.2,160.0 L219.7,150.9 L220.2,149.8 L223.0,149.8 L223.6,151.4 L224.9,158.5 L226.2,170.2 L227.1,183.0 L227.7,195.8 L228.3,213.6 L228.9,231.5 L230.4,195.8 L231.6,160.0 L232.1,150.9 L232.6,149.8 L235.4,149.8 L236.0,151.4 L237.3,158.5 L238.6,170.2 L239.5,183.0 L240.1,195.8 L240.7,213.6 L241.2,231.5 L242.7,195.8 L243.9,160.0 L244.4,150.9 L244.9,149.8 L247.7,149.8 L248.3,151.4 L249.6,158.5 L250.9,170.2 L251.8,183.0 L252.4,195.8 L253.0,213.6 L253.6,231.5 L255.1,195.8 L256.3,160.0 L256.8,150.9 L257.3,149.8 L260.1,149.8 L260.7,151.4 L262.0,158.5 L263.3,170.2 L264.2,183.0 L264.8,195.8 L265.4,213.6 L266.0,231.5 L267.5,195.8 L268.7,160.0 L269.2,150.9 L269.7,149.8 L272.5,149.8 L273.1,151.4 L274.4,158.5 L275.7,170.2 L276.6,183.0 L277.2,195.8 L277.8,213.6 L278.3,231.5 L279.8,195.8 L281.0,160.0 L281.5,150.9 L282.0,149.8 L284.8,149.8 L285.4,151.4 L286.7,158.5 L288.0,170.2 L288.9,183.0 L289.5,195.8 L290.1,213.6 L290.7,231.5 L292.2,195.8 L293.4,160.0 L293.9,150.9 L294.4,149.8 L297.2,149.8 L297.8,151.4 L299.1,158.5 L300.4,170.2 L301.3,183.0 L301.9,195.8 L302.5,213.6 L303.1,231.5 L304.6,195.8 L305.8,160.0 L306.3,150.9 L306.8,149.8 L309.6,149.8 L310.2,151.4 L311.5,158.5 L312.8,170.2 L313.7,183.0 L314.3,195.8 L314.9,213.6 L315.5,231.5 L317.0,195.8 L318.2,160.0 L318.7,150.9 L319.2,149.8 L322.0,149.8 L322.6,151.4 L323.9,158.5 L325.2,170.2 L326.1,183.0 L326.7,195.8 L327.3,213.6 L327.8,231.5 L329.3,195.8 L330.5,160.0 L331.0,150.9 L331.5,149.8 L334.3,149.8 L334.9,151.4 L336.2,158.5 L337.5,170.2 L338.4,183.0 L339.0,195.8 L339.6,213.6 L340.2,231.5 L341.7,195.8 L342.9,160.0 L343.4,150.9 L343.9,149.8 L346.7,149.8 L347.3,151.4 L348.6,158.5 L349.9,170.2 L350.8,183.0 L351.4,195.8 L352.0,213.6 L352.6,231.5 L354.1,195.8 L355.3,160.0 L355.8,150.9 L356.3,149.8 L359.1,149.8 L359.7,151.4 L361.0,158.5 L362.3,170.2 L363.2,183.0 L363.8,195.8 L364.4,213.6 L364.9,231.5 L366.4,195.8 L367.6,160.0 L368.1,150.9 L368.6,149.8 L371.4,149.8 L372.0,151.4 L373.3,158.5 L374.6,170.2 L375.5,183.0 L376.1,195.8 L376.7,213.6 L377.3,231.5 L378.8,195.8 L380.0,160.0 L380.5,150.9 L381.0,149.8 L383.8,149.8 L384.4,151.4 L385.7,158.5 L387.0,170.2 L387.9,183.0 L388.5,195.8 L389.1,213.6 L389.7,231.5 L391.2,195.8 L392.4,160.0 L392.9,150.9 L393.4,149.8 L396.2,149.8 L396.8,151.4 L398.1,158.5 L399.4,170.2 L400.3,183.0 L400.9,195.8 L401.5,213.6 L402.0,231.5 L403.5,195.8 L404.7,160.0 L405.2,150.9 L405.7,149.8 L408.5,149.8 L409.1,151.4 L410.4,158.5 L411.7,170.2 L412.6,183.0 L413.2,195.8 L413.8,213.6 L414.4,231.5 L415.9,195.8 L417.1,160.0 L417.6,150.9 L418.1,149.8 L420.9,149.8 L421.5,151.4 L422.8,158.5 L424.1,170.2 L425.0,183.0 L425.6,195.8 L426.2,213.6 L426.8,231.5 L428.3,195.8 L429.5,160.0 L430.0,150.9 L430.5,149.8 L433.3,149.8 L433.9,151.4 L435.2,158.5 L436.5,170.2 L437.4,183.0 L438.0,195.8 L438.6,213.6 L439.1,231.5 L440.6,195.8 L441.8,160.0 L442.3,150.9 L442.8,149.8 L445.6,149.8 L446.2,151.4 L447.5,158.5 L448.8,170.2 L449.7,183.0 L450.3,195.8 L450.9,213.6 L451.5,231.5 L453.0,195.8 L454.2,160.0 L454.7,150.9 L455.2,149.8 L458.0,149.8 L458.6,151.4 L459.9,158.5 L461.2,170.2 L462.1,183.0 L462.7,195.8 L463.3,213.6 L463.9,231.5 L465.4,195.8 L466.6,160.0 L467.1,150.9 L467.6,149.8 L470.4,149.8 L471.0,151.4 L472.3,158.5 L473.6,170.2 L474.5,183.0 L475.1,195.8 L475.7,213.6 L476.3,231.5 L477.8,195.8 L479.0,160.0 L479.5,150.9 L480.0,149.8 L482.8,149.8 L483.4,151.4 L484.7,158.5 L486.0,170.2 L486.9,183.0 L487.5,195.8 L488.1,213.6 L488.6,231.5 L490.1,195.8 L491.3,160.0 L491.8,150.9 L492.3,149.8 L495.1,149.8 L495.7,151.4 L497.0,158.5 L498.3,170.2 L499.2,183.0 L499.8,195.8 L500.4,213.6 L501.0,231.5 L502.5,195.8 L503.7,160.0 L504.2,150.9 L504.7,149.8 L507.5,149.8 L508.1,151.4 L509.4,158.5 L510.7,170.2 L511.6,183.0 L512.2,195.8 L512.8,213.6 L513.4,231.5 L514.9,195.8 L516.1,160.0 L516.6,150.9 L517.1,149.8 L519.9,149.8 L520.5,151.4 L521.8,158.5 L523.1,170.2 L524.0,183.0 L524.6,195.8 L525.2,213.6 L525.7,231.5 L527.2,195.8 L528.4,160.0 L528.9,150.9 L529.4,149.8 L532.2,149.8 L532.8,151.4 L534.1,158.5 L535.4,170.2 L536.3,183.0 L536.9,195.8 L537.5,213.6 L538.1,231.5 L539.6,195.8 L540.8,160.0 L541.3,150.9 L541.8,149.8 L544.6,149.8 L545.2,151.4 L546.5,158.5 L547.8,170.2 L548.7,183.0 L549.3,195.8 L549.9,213.6 L550.5,231.5 L552.0,195.8 L553.2,160.0 L553.7,150.9 L554.2,149.8 L557.0,149.8 L557.6,151.4 L558.9,158.5 L560.2,170.2 L561.1,183.0 L561.7,195.8 L562.3,213.6 L562.8,231.5 L564.3,195.8 L565.5,160.0 L566.0,150.9 L566.5,149.8 L569.3,149.8 L569.9,151.4 L571.2,158.5 L572.5,170.2 L573.4,183.0 L574.0,195.8 L574.6,213.6 L575.2,231.5 L576.7,195.8 L577.9,160.0 L578.4,150.9 L578.9,149.8 L581.7,149.8 L582.3,151.4 L583.6,158.5 L584.9,170.2 L585.8,183.0 L586.4,195.8 L587.0,213.6 L587.6,231.5 L589.1,195.8 L590.3,160.0 L590.8,150.9 L591.3,149.8 L594.1,149.8 L594.7,151.4 L596.0,158.5 L597.3,170.2 L598.2,183.0 L598.8,195.8 L599.4,213.6 L600.0,231.5 L601.5,195.8 L602.7,160.0 L603.2,150.9 L603.7,149.8 L606.5,149.8 L607.1,151.4 L608.4,158.5 L609.7,170.2 L610.6,183.0 L611.2,195.8 L611.8,213.6 L612.3,231.5 L613.8,195.8 L615.0,160.0 L615.5,150.9 L616.0,149.8 L618.8,149.8 L619.4,151.4 L620.7,158.5 L622.0,170.2 L622.9,183.0 L623.5,195.8 L624.1,213.6 L624.7,231.5 L626.2,195.8 L627.4,160.0 L627.9,150.9 L628.4,149.8 L631.2,149.8 L631.8,151.4 L633.1,158.5 L634.4,170.2 L635.3,183.0 L635.9,195.8 L636.5,213.6 L637.1,231.5 L638.6,195.8 L639.8,160.0 L640.3,150.9 L640.8,149.8 L643.6,149.8 L644.2,151.4 L645.5,158.5 L646.8,170.2 L647.7,183.0 L648.3,195.8 L648.9,213.6 L649.4,231.5 L650.9,195.8 L652.1,160.0 L652.6,150.9 L653.1,149.8 L655.9,149.8 L656.5,151.4 L657.8,158.5 L659.1,170.2 L660.0,183.0 L660.6,195.8 L661.2,213.6 L661.8,231.5 L663.3,195.8 L664.5,160.0 L665.0,150.9 L665.5,149.8 L668.3,149.8 L668.9,151.4 L670.2,158.5 L671.5,170.2 L672.4,183.0 L673.0,195.8 L673.6,213.6 L674.2,231.5 L675.7,195.8 L676.9,160.0 L677.4,150.9 L677.9,149.8 L680.7,149.8 L681.3,151.4 L682.6,158.5 L683.9,170.2 L684.8,183.0 L685.4,195.8 L686.0,213.6 L686.5,231.5 L688.0,195.8 L689.2,160.0 L689.8,150.9 L690.2,149.8 L693.0,149.8 L693.6,151.4 L695.0,158.5 L696.2,170.2 L697.1,183.0 L697.8,195.8 L698.4,213.6 L698.9,231.5 L700.4,195.8 L701.6,160.0 L702.1,150.9 L702.6,149.8 L705.4,149.8 L706.0,151.4 L707.3,158.5 L708.6,170.2 L709.5,183.0 L710.1,195.8 L710.7,213.6 L711.3,231.5 L712.8,195.8 L714.0,160.0 L714.5,150.9 L715.0,149.8 L717.8,149.8 L718.4,151.4 L719.7,158.5 L721.0,170.2 L721.9,183.0 L722.5,195.8 L723.1,213.6 L723.7,231.5 L725.2,195.8 L726.4,160.0 L726.9,150.9 L727.4,149.8 L730.2,149.8 L730.8,151.4 L732.1,158.5 L733.4,170.2 L734.3,183.0 L734.9,195.8 L735.5,213.6 L736.0,231.5 L737.5,195.8 L738.7,160.0 L739.2,150.9 L739.7,149.8 L742.5,149.8 L743.1,151.4 L744.4,158.5 L745.7,170.2 L746.6,183.0 L747.2,195.8 L747.8,213.6 L748.4,231.5 L749.9,195.8 L751.1,160.0 L751.6,150.9 L752.1,149.8 L754.9,149.8 L755.5,151.4 L756.8,158.5 L758.1,170.2 L759.0,183.0 L759.6,195.8 L760.2,213.6 L760.8,231.5 L762.3,195.8 L763.5,160.0 L764.0,150.9 L764.5,149.8 L767.3,149.8 L767.9,151.4 L769.2,158.5 L770.5,170.2 L771.4,183.0 L772.0,195.8 L772.6,213.6 L773.1,231.5 L774.6,195.8 L775.8,160.0 L776.3,150.9 L776.8,149.8 L779.6,149.8 L780.2,151.4 L781.5,158.5 L782.8,170.2 L783.7,183.0 L784.3,195.8 L784.9,213.6 L787.9,231.5 L790.8,200 Z" fill="#d9a35c" clip-path="url(#c2clip)"/><path d="M65.0,200 L65.0,231.5 L67.2,246.8 L68.0,246.8 L70.0,203.4 L71.0,191.7 L71.5,190.7 L74.5,190.7 L75.0,192.7 L76.0,200.9 L77.2,226.4 L78.8,244.2 L80.4,246.8 L82.4,203.4 L83.3,191.7 L83.8,190.7 L86.8,190.7 L87.4,192.7 L88.4,200.9 L89.6,226.4 L91.1,244.2 L92.8,246.8 L94.8,203.4 L95.7,191.7 L96.2,190.7 L99.2,190.7 L99.8,192.7 L100.8,200.9 L102.0,226.4 L103.5,244.2 L105.2,246.8 L107.2,203.4 L108.1,191.7 L108.6,190.7 L111.6,190.7 L112.2,192.7 L113.2,200.9 L114.4,226.4 L115.9,244.2 L117.5,246.8 L119.5,203.4 L120.4,191.7 L120.9,190.7 L123.9,190.7 L124.5,192.7 L125.5,200.9 L126.7,226.4 L128.2,244.2 L129.9,246.8 L131.9,203.4 L132.8,191.7 L133.3,190.7 L136.3,190.7 L136.9,192.7 L137.9,200.9 L139.1,226.4 L140.6,244.2 L142.3,246.8 L144.3,203.4 L145.2,191.7 L145.7,190.7 L148.7,190.7 L149.3,192.7 L150.3,200.9 L151.5,226.4 L153.0,244.2 L154.6,246.8 L156.6,203.4 L157.5,191.7 L158.0,190.7 L161.0,190.7 L161.6,192.7 L162.6,200.9 L163.8,226.4 L165.3,244.2 L167.0,246.8 L169.0,203.4 L169.9,191.7 L170.4,190.7 L173.4,190.7 L174.0,192.7 L175.0,200.9 L176.2,226.4 L177.7,244.2 L179.4,246.8 L181.4,203.4 L182.3,191.7 L182.8,190.7 L185.8,190.7 L186.4,192.7 L187.4,200.9 L188.6,226.4 L190.1,244.2 L191.8,246.8 L193.8,203.4 L194.7,191.7 L195.2,190.7 L198.2,190.7 L198.8,192.7 L199.8,200.9 L201.0,226.4 L202.5,244.2 L204.1,246.8 L206.1,203.4 L207.0,191.7 L207.5,190.7 L210.5,190.7 L211.1,192.7 L212.1,200.9 L213.3,226.4 L214.8,244.2 L216.5,246.8 L218.5,203.4 L219.4,191.7 L219.9,190.7 L222.9,190.7 L223.5,192.7 L224.5,200.9 L225.7,226.4 L227.2,244.2 L228.9,246.8 L230.9,203.4 L231.8,191.7 L232.3,190.7 L235.3,190.7 L235.9,192.7 L236.9,200.9 L238.1,226.4 L239.6,244.2 L241.2,246.8 L243.2,203.4 L244.1,191.7 L244.6,190.7 L247.6,190.7 L248.2,192.7 L249.2,200.9 L250.4,226.4 L251.9,244.2 L253.6,246.8 L255.6,203.4 L256.5,191.7 L257.0,190.7 L260.0,190.7 L260.6,192.7 L261.6,200.9 L262.8,226.4 L264.3,244.2 L266.0,246.8 L268.0,203.4 L268.9,191.7 L269.4,190.7 L272.4,190.7 L273.0,192.7 L274.0,200.9 L275.2,226.4 L276.7,244.2 L278.3,246.8 L280.3,203.4 L281.2,191.7 L281.7,190.7 L284.7,190.7 L285.3,192.7 L286.3,200.9 L287.5,226.4 L289.0,244.2 L290.7,246.8 L292.7,203.4 L293.6,191.7 L294.1,190.7 L297.1,190.7 L297.7,192.7 L298.7,200.9 L299.9,226.4 L301.4,244.2 L303.1,246.8 L305.1,203.4 L306.0,191.7 L306.5,190.7 L309.5,190.7 L310.1,192.7 L311.1,200.9 L312.3,226.4 L313.8,244.2 L315.5,246.8 L317.5,203.4 L318.4,191.7 L318.9,190.7 L321.9,190.7 L322.5,192.7 L323.5,200.9 L324.7,226.4 L326.2,244.2 L327.8,246.8 L329.8,203.4 L330.7,191.7 L331.2,190.7 L334.2,190.7 L334.8,192.7 L335.8,200.9 L337.0,226.4 L338.5,244.2 L340.2,246.8 L342.2,203.4 L343.1,191.7 L343.6,190.7 L346.6,190.7 L347.2,192.7 L348.2,200.9 L349.4,226.4 L350.9,244.2 L352.6,246.8 L354.6,203.4 L355.5,191.7 L356.0,190.7 L359.0,190.7 L359.6,192.7 L360.6,200.9 L361.8,226.4 L363.3,244.2 L364.9,246.8 L366.9,203.4 L367.8,191.7 L368.3,190.7 L371.3,190.7 L371.9,192.7 L372.9,200.9 L374.1,226.4 L375.6,244.2 L377.3,246.8 L379.3,203.4 L380.2,191.7 L380.7,190.7 L383.7,190.7 L384.3,192.7 L385.3,200.9 L386.5,226.4 L388.0,244.2 L389.7,246.8 L391.7,203.4 L392.6,191.7 L393.1,190.7 L396.1,190.7 L396.7,192.7 L397.7,200.9 L398.9,226.4 L400.4,244.2 L402.0,246.8 L404.0,203.4 L404.9,191.7 L405.4,190.7 L408.4,190.7 L409.0,192.7 L410.0,200.9 L411.2,226.4 L412.7,244.2 L414.4,246.8 L416.4,203.4 L417.3,191.7 L417.8,190.7 L420.8,190.7 L421.4,192.7 L422.4,200.9 L423.6,226.4 L425.1,244.2 L426.8,246.8 L428.8,203.4 L429.7,191.7 L430.2,190.7 L433.2,190.7 L433.8,192.7 L434.8,200.9 L436.0,226.4 L437.5,244.2 L439.1,246.8 L441.1,203.4 L442.0,191.7 L442.5,190.7 L445.5,190.7 L446.1,192.7 L447.1,200.9 L448.3,226.4 L449.8,244.2 L451.5,246.8 L453.5,203.4 L454.4,191.7 L454.9,190.7 L457.9,190.7 L458.5,192.7 L459.5,200.9 L460.7,226.4 L462.2,244.2 L463.9,246.8 L465.9,203.4 L466.8,191.7 L467.3,190.7 L470.3,190.7 L470.9,192.7 L471.9,200.9 L473.1,226.4 L474.6,244.2 L476.3,246.8 L478.3,203.4 L479.2,191.7 L479.7,190.7 L482.7,190.7 L483.3,192.7 L484.3,200.9 L485.5,226.4 L487.0,244.2 L488.6,246.8 L490.6,203.4 L491.5,191.7 L492.0,190.7 L495.0,190.7 L495.6,192.7 L496.6,200.9 L497.8,226.4 L499.3,244.2 L501.0,246.8 L503.0,203.4 L503.9,191.7 L504.4,190.7 L507.4,190.7 L508.0,192.7 L509.0,200.9 L510.2,226.4 L511.7,244.2 L513.4,246.8 L515.4,203.4 L516.3,191.7 L516.8,190.7 L519.8,190.7 L520.4,192.7 L521.4,200.9 L522.6,226.4 L524.1,244.2 L525.7,246.8 L527.7,203.4 L528.6,191.7 L529.1,190.7 L532.1,190.7 L532.7,192.7 L533.7,200.9 L534.9,226.4 L536.4,244.2 L538.1,246.8 L540.1,203.4 L541.0,191.7 L541.5,190.7 L544.5,190.7 L545.1,192.7 L546.1,200.9 L547.3,226.4 L548.8,244.2 L550.5,246.8 L552.5,203.4 L553.4,191.7 L553.9,190.7 L556.9,190.7 L557.5,192.7 L558.5,200.9 L559.7,226.4 L561.2,244.2 L562.8,246.8 L564.8,203.4 L565.8,191.7 L566.2,190.7 L569.2,190.7 L569.8,192.7 L570.8,200.9 L572.0,226.4 L573.5,244.2 L575.2,246.8 L577.2,203.4 L578.1,191.7 L578.6,190.7 L581.6,190.7 L582.2,192.7 L583.2,200.9 L584.4,226.4 L585.9,244.2 L587.6,246.8 L589.6,203.4 L590.5,191.7 L591.0,190.7 L594.0,190.7 L594.6,192.7 L595.6,200.9 L596.8,226.4 L598.3,244.2 L600.0,246.8 L602.0,203.4 L602.9,191.7 L603.4,190.7 L606.4,190.7 L607.0,192.7 L608.0,200.9 L609.2,226.4 L610.7,244.2 L612.3,246.8 L614.3,203.4 L615.2,191.7 L615.7,190.7 L618.7,190.7 L619.3,192.7 L620.3,200.9 L621.5,226.4 L623.0,244.2 L624.7,246.8 L626.7,203.4 L627.6,191.7 L628.1,190.7 L631.1,190.7 L631.7,192.7 L632.7,200.9 L633.9,226.4 L635.4,244.2 L637.1,246.8 L639.1,203.4 L640.0,191.7 L640.5,190.7 L643.5,190.7 L644.1,192.7 L645.1,200.9 L646.3,226.4 L647.8,244.2 L649.4,246.8 L651.4,203.4 L652.3,191.7 L652.8,190.7 L655.8,190.7 L656.4,192.7 L657.4,200.9 L658.6,226.4 L660.1,244.2 L661.8,246.8 L663.8,203.4 L664.7,191.7 L665.2,190.7 L668.2,190.7 L668.8,192.7 L669.8,200.9 L671.0,226.4 L672.5,244.2 L674.2,246.8 L676.2,203.4 L677.1,191.7 L677.6,190.7 L680.6,190.7 L681.2,192.7 L682.2,200.9 L683.4,226.4 L684.9,244.2 L686.5,246.8 L688.5,203.4 L689.5,191.7 L690.0,190.7 L693.0,190.7 L693.5,192.7 L694.5,200.9 L695.8,226.4 L697.2,244.2 L698.9,246.8 L700.9,203.4 L701.8,191.7 L702.3,190.7 L705.3,190.7 L705.9,192.7 L706.9,200.9 L708.1,226.4 L709.6,244.2 L711.3,246.8 L713.3,203.4 L714.2,191.7 L714.7,190.7 L717.7,190.7 L718.3,192.7 L719.3,200.9 L720.5,226.4 L722.0,244.2 L723.7,246.8 L725.7,203.4 L726.6,191.7 L727.1,190.7 L730.1,190.7 L730.7,192.7 L731.7,200.9 L732.9,226.4 L734.4,244.2 L736.0,246.8 L738.0,203.4 L738.9,191.7 L739.4,190.7 L742.4,190.7 L743.0,192.7 L744.0,200.9 L745.2,226.4 L746.7,244.2 L748.4,246.8 L750.4,203.4 L751.3,191.7 L751.8,190.7 L754.8,190.7 L755.4,192.7 L756.4,200.9 L757.6,226.4 L759.1,244.2 L760.8,246.8 L762.8,203.4 L763.7,191.7 L764.2,190.7 L767.2,190.7 L767.8,192.7 L768.8,200.9 L770.0,226.4 L771.5,244.2 L773.1,246.8 L775.1,203.4 L776.0,191.7 L776.5,190.7 L779.5,190.7 L780.1,192.7 L781.1,200.9 L782.3,226.4 L783.8,244.2 L786.8,246.8 L790.8,200 Z" fill="#b28cf5" clip-path="url(#c2clip)"/></svg>
    <span class="yl" style="left:6px;top:60.7px">35#</span><span class="yl" style="left:6px;top:86.2px">30#</span><span class="yl" style="left:6px;top:111.7px">25#</span><span class="yl" style="left:6px;top:137.2px">20#</span><span class="yl" style="left:6px;top:162.8px">15#</span><span class="yl" style="left:6px;top:188.3px">10#</span><!--/C2PLOT-->
  </div>
</div>

<!-- ================= MASCOT ================= -->
<svg class="abs" style="left:1822px;top:910px;z-index:30" width="60" height="75" viewBox="0 0 60 75">
  <defs>
    <radialGradient id="rbHead" cx="42%" cy="30%" r="75%"><stop offset="0" stop-color="#ffffff"/><stop offset=".55" stop-color="#f8f1e9"/><stop offset="1" stop-color="#dccfc2"/></radialGradient>
    <radialGradient id="rbBody" cx="45%" cy="30%" r="75%"><stop offset="0" stop-color="#fffaf4"/><stop offset=".6" stop-color="#f5ebe0"/><stop offset="1" stop-color="#d8c9ba"/></radialGradient>
    <linearGradient id="rbRed" x1="0" y1="0" x2="1" y2="1"><stop offset="0" stop-color="#f8533a"/><stop offset="1" stop-color="#dc2c1a"/></linearGradient>
  </defs>
  <!-- arms -->
  <path d="M21.500,46.500 Q14,44 10.500,38" fill="none" stroke="#f3e8dc" stroke-width="4.600" stroke-linecap="round"/>
  <path d="M43.500,45 Q48.500,47 50,53" fill="none" stroke="#f3e8dc" stroke-width="4.600" stroke-linecap="round"/>
  <!-- lower cone -->
  <path d="M19,53.500 Q32,61 45.200,53.500 Q41.500,65.500 33.500,70.400 Q31.800,71.400 30.300,70 Q22.500,63.500 19,53.500 Z" fill="url(#rbRed)"/>
  <!-- torso -->
  <path d="M19.200,46 Q19.500,38.800 32,38.800 Q45,38.800 45.300,46 L45.200,55 Q32,63 19,55 Z" fill="url(#rbBody)"/>
  <!-- collar -->
  <path d="M23.800,39.200 Q33.400,37.600 43,39.200 Q38.500,44.200 33.400,44.400 Q28.300,44.200 23.800,39.200 Z" fill="url(#rbRed)"/>
  <!-- chest mark -->
  <g fill="#e8361f"><path d="M28.300,47.200 Q29,46.300 29.700,47.200 L33.300,53.600 Q33.600,54.600 32.600,54.600 L31.400,54.600 Q30.800,54.600 30.500,54 L29.200,51.700 L28,53.800 Q27.700,54.600 26.900,54.600 L25.500,54.600 Q24.500,54.600 24.900,53.600 Z"/><circle cx="34" cy="47.600" r="1.100"/><path d="M35.300,50.600 L37.200,53.600" stroke="#e8361f" stroke-width="2.100" stroke-linecap="round"/></g>
  <!-- hands -->
  <ellipse cx="8.700" cy="34.200" rx="4.500" ry="6.600" transform="rotate(-14 8.700 34.200)" fill="url(#rbRed)"/>
  <path d="M11.500,29.500 Q13.800,30.500 12.800,34" fill="none" stroke="#ef4a32" stroke-width="2.400" stroke-linecap="round"/>
  <ellipse cx="51" cy="55.400" rx="3.700" ry="5.100" transform="rotate(-12 51 55.400)" fill="url(#rbRed)"/>
  <!-- head -->
  <ellipse cx="49.700" cy="24.900" rx="1.900" ry="5.400" fill="#e63c26"/>
  <path d="M35.500,4 C44,7.500 52.300,18 51.300,27.500 C50.500,35.500 43,38.900 33,38.900 C23,38.900 15.800,35.500 15.800,27.500 C15.800,17 27,5.500 35.500,4 Z" fill="url(#rbHead)"/>
  <ellipse cx="49.200" cy="24.900" rx="1.500" ry="5.200" fill="#ea4029"/>
  <path d="M31.200,9.200 L34.700,13.800 L27.200,13.800 Z" fill="#f04a30" stroke="#f04a30" stroke-width=".8" stroke-linejoin="round"/>
  <rect x="18" y="17.200" width="26" height="17.600" rx="8.600" fill="#17140f"/>
  <ellipse cx="23.500" cy="26.100" rx="2.700" ry="4.100" fill="#13ece4"/><ellipse cx="23.300" cy="24.900" rx="1.500" ry="2.200" fill="#7df7f0"/>
  <ellipse cx="37.500" cy="26.100" rx="2.700" ry="4.100" fill="#13ece4"/><ellipse cx="37.300" cy="24.900" rx="1.500" ry="2.200" fill="#7df7f0"/>
</svg>

</body>
</html>
